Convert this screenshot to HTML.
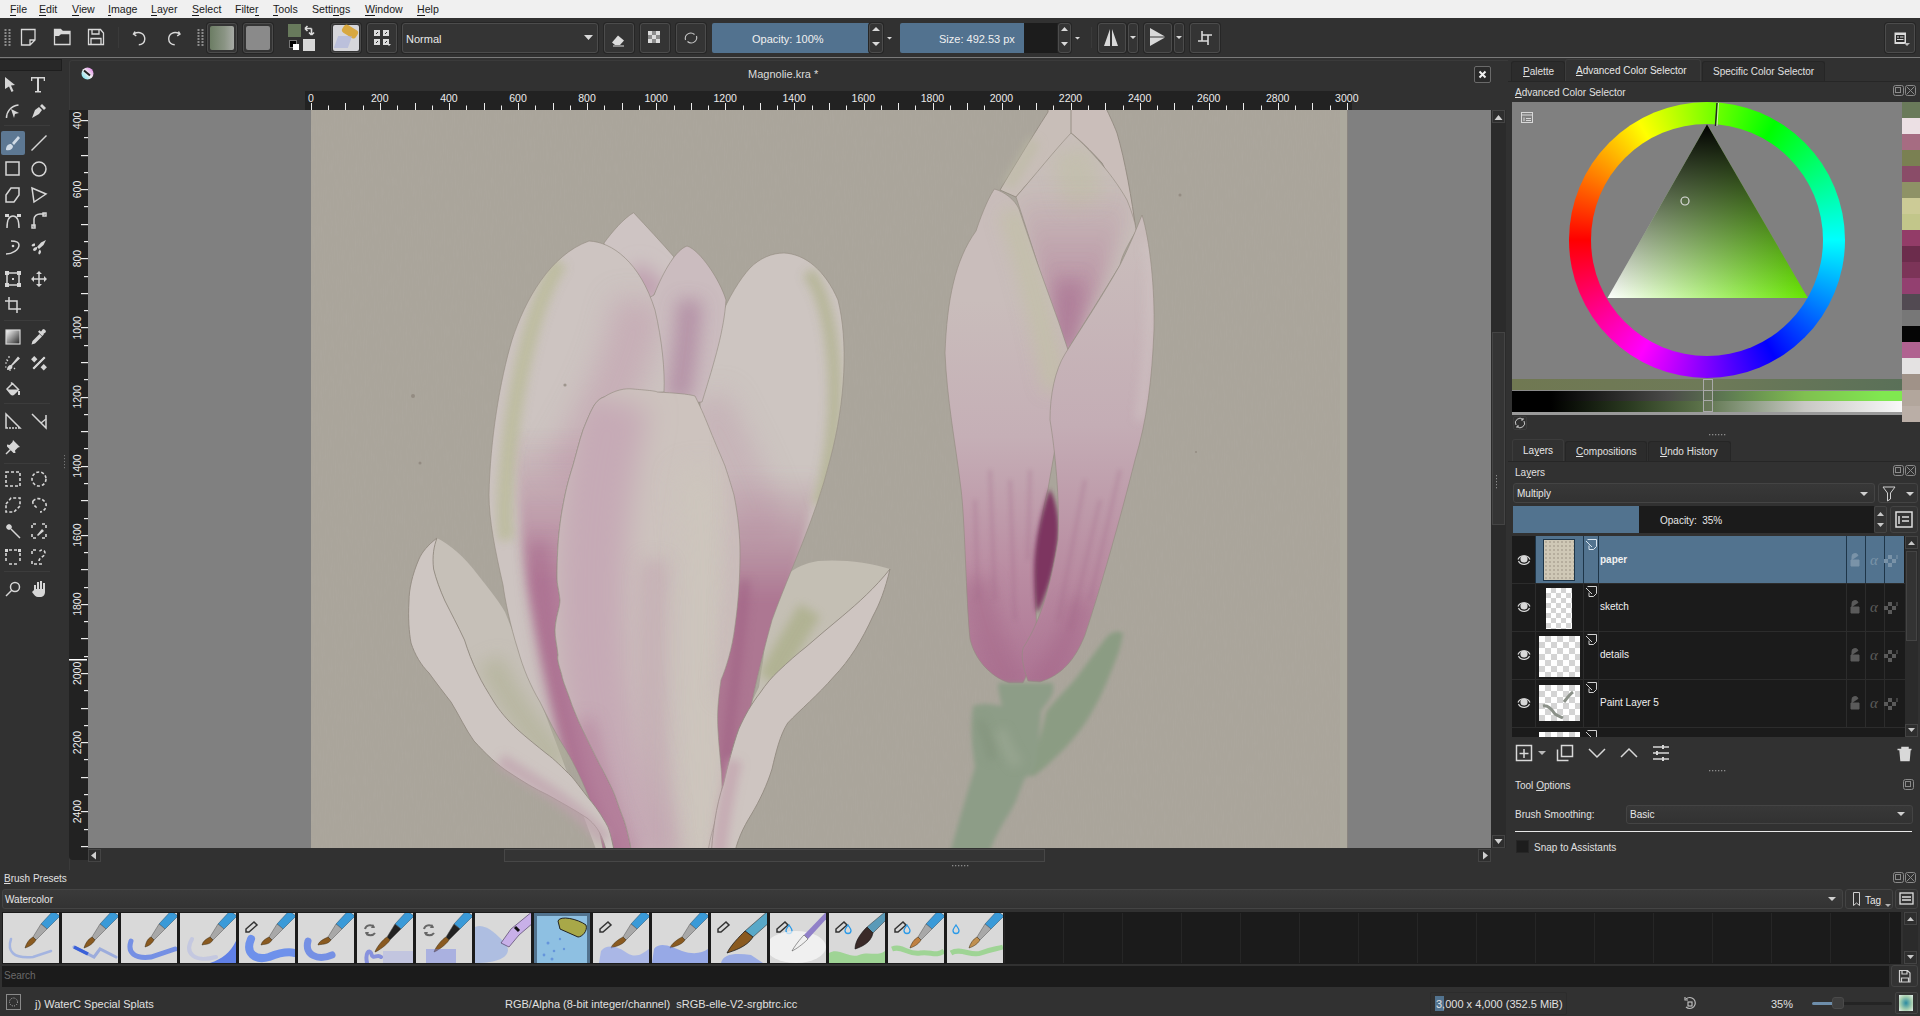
<!DOCTYPE html>
<html><head><meta charset="utf-8">
<style>
*{box-sizing:border-box;margin:0;padding:0}
html,body{width:1920px;height:1016px;overflow:hidden;background:#313131;font-family:"Liberation Sans",sans-serif;color:#e6e6e6}
.a{position:absolute}
#menu{left:0;top:0;width:1920px;height:18px;background:#f0f0f0;color:#1a1a1a;font-size:10.6px}
#menu span{position:absolute;top:3px}
#menu u{text-decoration:none;border-bottom:1px solid #1a1a1a}
#tb{left:0;top:18px;width:1920px;height:40px;background:#313131;border-bottom:1px solid #7a7a7a}
.btn{position:absolute;border:1px solid #4c4c4c;border-radius:3px;background:#343434;box-shadow:0 0 0 1px #262626}
.txt{position:absolute;white-space:nowrap}
.sm{font-size:10px}
</style></head><body>
<div id="menu" class="a">
<span style="left:10px"><u>F</u>ile</span>
<span style="left:39px"><u>E</u>dit</span>
<span style="left:72px"><u>V</u>iew</span>
<span style="left:108px"><u>I</u>mage</span>
<span style="left:151px"><u>L</u>ayer</span>
<span style="left:192px"><u>S</u>elect</span>
<span style="left:235px">Filte<u>r</u></span>
<span style="left:273px"><u>T</u>ools</span>
<span style="left:312px">Setti<u>n</u>gs</span>
<span style="left:365px"><u>W</u>indow</span>
<span style="left:417px"><u>H</u>elp</span>
</div>
<div id="tb" class="a">
<div class="btn" style="left:207px;top:5px;width:30px;height:30px;"></div>
<div class="a" style="left:210px;top:8px;width:24px;height:24px;border-radius:2px;background:linear-gradient(90deg,#6c7d64,#8a9484 60%,#a8aba6)"></div>
<div class="btn" style="left:243px;top:5px;width:30px;height:30px;"></div>
<div class="a" style="left:246px;top:8px;width:24px;height:24px;border-radius:2px;background:#8a8a8a"></div>
<div class="a" style="left:288px;top:6px;width:13px;height:13px;background:#687a5c"></div>
<div class="a" style="left:303px;top:21px;width:12px;height:12px;background:#d8d8d8"></div>
<div class="a" style="left:289px;top:22px;width:8px;height:8px;background:#000;border:1px solid #777"></div>
<div class="a" style="left:293px;top:26px;width:6px;height:6px;background:#fff"></div>
<div class="btn" style="left:331px;top:5px;width:30px;height:30px;"></div>
<div class="a" style="left:333px;top:7px;width:26px;height:26px;border-radius:2px;background:#d6d6da"></div>
<div class="a" style="left:342px;top:9px;width:16px;height:9px;border-radius:3px;background:#d8a840;transform:rotate(32deg)"></div>
<div class="a" style="left:336px;top:18px;width:14px;height:12px;background:#a8b0dc;opacity:.6;transform:skew(-20deg)"></div>
<div class="btn" style="left:367px;top:5px;width:30px;height:30px;"></div>
<div class="btn" style="left:402px;top:5px;width:196px;height:30px;"></div>
<div class="txt" style="left:406px;top:15px;font-size:11px;color:#e8e8e8">Normal</div>
<div class="btn" style="left:604px;top:5px;width:30px;height:30px;"></div>
<div class="btn" style="left:640px;top:5px;width:30px;height:30px;"></div>
<div class="btn" style="left:676px;top:5px;width:30px;height:30px;"></div>
<div class="a" style="left:712px;top:5px;width:157px;height:30px;background:#52728f;border-radius:2px 0 0 2px"></div>
<div class="txt" style="left:752px;top:15px;font-size:11px;color:#f0f0f0">Opacity: 100%</div>
<div class="btn" style="left:869px;top:5px;width:14px;height:30px;"></div>
<div class="a" style="left:900px;top:5px;width:124px;height:30px;background:#52728f;border-radius:2px 0 0 2px"></div>
<div class="a" style="left:1024px;top:5px;width:34px;height:30px;background:#1c1c1c"></div>
<div class="txt" style="left:939px;top:15px;font-size:11px;color:#f0f0f0">Size: 492.53 px</div>
<div class="btn" style="left:1058px;top:5px;width:13px;height:30px;"></div>
<div class="btn" style="left:1098px;top:5px;width:28px;height:30px;"></div>
<div class="btn" style="left:1128px;top:5px;width:10px;height:30px;"></div>
<div class="btn" style="left:1144px;top:5px;width:28px;height:30px;"></div>
<div class="btn" style="left:1174px;top:5px;width:10px;height:30px;"></div>
<div class="btn" style="left:1190px;top:5px;width:30px;height:30px;"></div>
<div class="btn" style="left:1885px;top:5px;width:30px;height:30px;"></div>
<svg class="a" style="left:0;top:0" width="1920" height="40" viewBox="0 18 1920 40" fill="none" stroke="#d9d9d9" stroke-width="1.3">
<g fill="#8c8c8c" stroke="none">
<rect x="4.5" y="29" width="2" height="2"/><rect x="8.5" y="29" width="2" height="2"/>
<rect x="4.5" y="32" width="2" height="2"/><rect x="8.5" y="32" width="2" height="2"/>
<rect x="4.5" y="35" width="2" height="2"/><rect x="8.5" y="35" width="2" height="2"/>
<rect x="4.5" y="38" width="2" height="2"/><rect x="8.5" y="38" width="2" height="2"/>
<rect x="4.5" y="41" width="2" height="2"/><rect x="8.5" y="41" width="2" height="2"/>
<rect x="4.5" y="44" width="2" height="2"/><rect x="8.5" y="44" width="2" height="2"/>
<rect x="197.5" y="29" width="2" height="2"/><rect x="201.5" y="29" width="2" height="2"/>
<rect x="197.5" y="32" width="2" height="2"/><rect x="201.5" y="32" width="2" height="2"/>
<rect x="197.5" y="35" width="2" height="2"/><rect x="201.5" y="35" width="2" height="2"/>
<rect x="197.5" y="38" width="2" height="2"/><rect x="201.5" y="38" width="2" height="2"/>
<rect x="197.5" y="41" width="2" height="2"/><rect x="201.5" y="41" width="2" height="2"/>
<rect x="197.5" y="44" width="2" height="2"/><rect x="201.5" y="44" width="2" height="2"/>
</g>
<path d="M21.5 29.5h13.5v10.5l-5 5h-8.5z M35 40h-5v5"/>
<path d="M54.5 33.5h15.5v11h-15.5z M54.5 33.5v-4h6l2 2h7.5v2.5"/>
<path fill="#d9d9d9" stroke="none" d="M54 29h6.5l2 2h7.5v3h-9l-2 2h-5z"/>
<path d="M88.5 29.5h12l3 3.5v11.5h-15z M92 29.5v4.5h7v-4.5 M91 44.5v-6h10v6"/>
<path stroke-width="1.4" d="M135 31.5l-1.5 2.5 2.8 1.8 M133.8 33.8c6-3 11 0 11 5.2c0 3.5-2.8 5.8-6 5.8"/>
<path stroke-width="1.4" d="M178.5 31.5l1.5 2.5-2.8 1.8 M179.7 33.8c-6-3-11 0-11 5.2c0 3.5 2.8 5.8 6 5.8"/>
<line x1="118.5" y1="27" x2="118.5" y2="48" stroke="#3a3a3a" stroke-width="1"/>
<line x1="1091.5" y1="27" x2="1091.5" y2="48" stroke="#3a3a3a" stroke-width="1"/>
<path fill="#d9d9d9" stroke="none" d="M584 35h9l-4.5 5z M887 37h5l-2.5 2.5z M1075 37h5l-2.5 2.5z M1130 36h6l-3 3z M1176 36h6l-3 3z M872 31h8l-4-4z M872 42h8l-4 4z M1061 31h7l-3.5-4z M1061 42h7l-3.5 4z"/>
<path fill="#d9d9d9" stroke="none" d="M1104 46l6-17v17z M1118 46l-6-17v17z M1150 28l15 8.5h-15z M1150 46l15-8.5h-15z"/>
<path stroke-width="1.6" d="M1202 31v10 M1198 41h10 M1202 35h10 M1208 35v10"/>
</svg>
<svg class="a" style="left:0;top:0" width="1920" height="40" viewBox="0 18 1920 40" fill="none" stroke="#dcdcdc" stroke-width="1.3">
<path d="M305 28.5h6.5M305 28.5l2.5-2.5M305 28.5l2.5 2.5M311.5 28.5v6.5M311.5 35l-2.5-2.5M311.5 35l2.5-2.5" stroke-width="1.6"/>
<g fill="#dcdcdc" stroke="none"><rect x="374" y="30" width="6" height="6"/><rect x="383" y="30" width="6" height="6"/><rect x="374" y="39" width="6" height="6"/><rect x="383" y="39" width="6" height="6"/></g>
<g stroke="#333" stroke-width="1"><path d="M376 34l2-2M385 34l2-2M376 43l2-2M385 43l2-2"/></g>
<path d="M387 44h4l-2 2z" fill="#dcdcdc" stroke="none"/>
<path d="M612 42.5l6-7 6 5-4 4.5h-5z" fill="#dcdcdc" stroke="none"/><path d="M613 46h11" stroke-width="1"/>
<g fill="#dcdcdc" stroke="none"><rect x="648" y="31" width="4" height="4"/><rect x="656" y="31" width="4" height="4"/><rect x="652" y="35" width="4" height="4"/><rect x="648" y="39" width="4" height="4"/><rect x="656" y="39" width="4" height="4"/></g>
<g fill="#8a8a8a" stroke="none"><rect x="652" y="31" width="4" height="4"/><rect x="648" y="35" width="4" height="4"/><rect x="656" y="35" width="4" height="4"/><rect x="652" y="39" width="4" height="4"/></g>
<path d="M685.5 40a5.5 5.5 0 0 1 9-5.5M696.5 36a5.5 5.5 0 0 1-9 5.5" stroke="#c8c8c8" stroke-width="1.1"/>
<rect x="1894.5" y="32.5" width="11.5" height="11.5" fill="#dcdcdc" stroke="none"/><rect x="1896" y="35" width="8.5" height="7" fill="#2a2a2a" stroke="none"/>
<path d="M1897 37h2M1900 37h3.5M1897 39.5h6.5" stroke="#dcdcdc" stroke-width="1"/>
<path d="M1904 43h6l-3 3z" fill="#bbb" stroke="none"/>
</svg>
</div>
<div class="a" style="left:0;top:58px;width:68px;height:812px;background:#313131"></div>
<div class="a" style="left:0;top:59px;width:62px;height:12px;background:#282828;border:1px solid #1e1e1e;border-left:none"></div>
<svg class="a" style="left:0;top:0" width="68" height="620"><line x1="4" y1="125.5" x2="50" y2="125.5" stroke="#3c3c3c"/><line x1="4" y1="320.5" x2="50" y2="320.5" stroke="#3c3c3c"/><line x1="4" y1="403.5" x2="50" y2="403.5" stroke="#3c3c3c"/><line x1="4" y1="463.5" x2="50" y2="463.5" stroke="#3c3c3c"/><line x1="4" y1="571.5" x2="50" y2="571.5" stroke="#3c3c3c"/><g transform="translate(5,77)"><path fill="#d6d6d6" d="M0 0 L10 8 L6 8.5 L8.5 14 L6.5 15 L4 9.5 L0 12z"/></g><g transform="translate(31,77)"><path fill="#d6d6d6" d="M0 0h14v4h-1.3v-2.5h-4.7v12.5h2v1.5h-6v-1.5h2v-12.5h-4.7v2.5h-1.3z"/></g><g transform="translate(5,103)"><path stroke="#d6d6d6" stroke-width="1.5" fill="none" stroke-width="2" d="M1.5 15c0-6 4-12 12-13"/><path fill="#d6d6d6" d="M6 6l8 4-4 1-1 4z"/></g><g transform="translate(31,103)"><path fill="#d6d6d6" d="M1 15l3-8 4-3 3 3-3 4-7 4zM9 3l2-2 4 4-2 2z"/></g><rect x="1" y="131" width="24" height="24" rx="2" fill="#5d7893"/><g transform="translate(5,135)"><path fill="#d0dbe6" d="M1 15c0-4 2-6 5-6l2 2c0 3-3 5-7 4zM7 8l6-7 2 2-6 7z"/></g><g transform="translate(31,135)"><path stroke="#d6d6d6" stroke-width="1.5" fill="none" stroke-width="1.6" d="M0.5 15.5L15.5 0.5"/></g><g transform="translate(5,161)"><rect stroke="#d6d6d6" stroke-width="1.5" fill="none" x="1" y="1" width="13" height="13"/></g><g transform="translate(31,161)"><circle stroke="#d6d6d6" stroke-width="1.5" fill="none" cx="8" cy="8" r="7"/></g><g transform="translate(5,187)"><path stroke="#d6d6d6" stroke-width="1.5" fill="none" d="M1 8l5-7h8v7l-5 7h-8z"/></g><g transform="translate(31,187)"><path stroke="#d6d6d6" stroke-width="1.5" fill="none" d="M1 1l14 6-12 8z"/></g><g transform="translate(5,213)"><path stroke="#d6d6d6" stroke-width="1.5" fill="none" d="M2 15c0-9 3-12 6-12s6 3 6 12"/><rect fill="#d6d6d6" x="0" y="1" width="4" height="3"/><rect fill="#d6d6d6" x="12" y="1" width="4" height="3"/></g><g transform="translate(31,213)"><path stroke="#d6d6d6" stroke-width="1.5" fill="none" d="M3 14v-8c0-3 3-5 6-5h5"/><rect stroke="#d6d6d6" stroke-width="1.5" fill="none" x="1" y="12" width="3" height="3"/><rect stroke="#d6d6d6" stroke-width="1.5" fill="none" x="12" y="0" width="3" height="3"/></g><g transform="translate(5,239)"><path stroke="#d6d6d6" stroke-width="1.5" fill="none" d="M1 15c6 0 13-4 13-9c0-3-4-4-8-4"/><circle fill="#d6d6d6" cx="8" cy="7" r="1.3"/></g><g transform="translate(31,239)"><path fill="#d6d6d6" d="M15 1l-5 2.5-4 4.5 2 2 4.5-4z"/><path fill="#d6d6d6" d="M6 8c-2 0-4 1-4 3l1 1c2 0 3-2 3-2zM9 10.5c-1 1-2 2.5-1.5 4.5l1 0.5c1.5-1 1.5-3 1.5-3zM4 4.5c-1.5 0-3 0.5-3.5 2l1 1c1.5 0 2.5-1 2.5-1z"/></g><g transform="translate(5,271)"><rect stroke="#d6d6d6" stroke-width="1.5" fill="none" x="2" y="2" width="12" height="12"/><rect fill="#d6d6d6" x="0" y="0" width="4" height="4"/><rect fill="#d6d6d6" x="12" y="0" width="4" height="4"/><rect fill="#d6d6d6" x="0" y="12" width="4" height="4"/><rect fill="#d6d6d6" x="12" y="12" width="4" height="4"/><rect fill="#d6d6d6" x="7" y="7" width="2" height="2"/></g><g transform="translate(31,271)"><path stroke="#d6d6d6" stroke-width="1.5" fill="none" d="M8 1v14M1 8h14"/><path fill="#d6d6d6" d="M8 0l3 3h-6zM8 16l3-3h-6zM0 8l3-3v6zM16 8l-3-3v6z"/></g><g transform="translate(5,297)"><path stroke="#d6d6d6" stroke-width="1.5" fill="none" stroke-width="1.8" d="M4 0v12h12M0 4h12v12"/></g><g transform="translate(5,329)"><defs><linearGradient id="gg" x1="0" y1="0" x2="1" y2="1"><stop offset="0" stop-color="#fff"/><stop offset="1" stop-color="#222"/></linearGradient></defs><rect x="1" y="1" width="14" height="14" fill="url(#gg)" stroke="#d6d6d6" stroke-width="1.2"/></g><g transform="translate(31,329)"><path fill="#d6d6d6" d="M0.5 15.5l1-3.5 7-7 2.5 2.5-7 7z"/><path fill="#d6d6d6" d="M8.5 4l2-2 1-1.5 1.5-0.5 2 2-0.5 1.5-1.5 1-2 2z"/><rect fill="#d6d6d6" x="7" y="3" width="6" height="2.2" transform="rotate(45 10 4)"/></g><g transform="translate(5,355)"><path fill="#d6d6d6" d="M6 10l7-8.5 2 2-8 7.5zM2 15c0-3 1.5-5 4-5l1.5 1.5c0 2.5-2 3.5-5.5 3.5z"/><g stroke="#d6d6d6" stroke-width="1.2"><path d="M0 8h2M1.5 4.5l1.5 1.5M4 1v2M0 12h1.5M5 14.5v1.5M9 13l1 1"/></g></g><g transform="translate(31,355)"><path fill="#d6d6d6" d="M3 14.5l-1.5-1.5 11.5-11.5 1.5 1.5z" transform="translate(0 0)"/><path stroke="#d6d6d6" stroke-width="1.5" fill="none" stroke-width="3" d="M2.5 13.5L13.5 2.5"/><rect fill="#d6d6d6" x="1" y="2" width="4.5" height="4.5" transform="rotate(45 3.25 4.25)"/><rect fill="#d6d6d6" x="10.5" y="10" width="4.5" height="4.5" transform="rotate(45 12.75 12.25)"/></g><g transform="translate(5,381)"><path stroke="#d6d6d6" stroke-width="1.5" fill="none" stroke-width="1.6" d="M2 8l5.5-5.5 6 6-4.5 4.5c-1 1-2 1-3 0z"/><path fill="#d6d6d6" d="M2.5 8.5h11l-4.5 4.5c-1 1-2 1-3 0z"/><rect fill="#d6d6d6" x="13" y="10" width="2" height="4"/><path stroke="#d6d6d6" stroke-width="1.5" fill="none" stroke-width="1.2" d="M6 1.5l2 2"/></g><g transform="translate(5,413)"><path stroke="#d6d6d6" stroke-width="1.5" fill="none" stroke-width="2" d="M1 1v14h14z"/><path fill="#313131" d="M4 7v6h6z"/><g fill="#313131"><rect x="3" y="14" width="1" height="2"/><rect x="6" y="14" width="1" height="2"/><rect x="9" y="14" width="1" height="2"/><rect x="12" y="14" width="1" height="2"/></g></g><g transform="translate(31,413)"><path stroke="#d6d6d6" stroke-width="1.5" fill="none" stroke-width="2" d="M1 1l14 14V2"/><path stroke="#d6d6d6" stroke-width="1.5" fill="none" stroke-width="1.4" d="M10 10l5-4"/></g><g transform="translate(5,439)"><path fill="#d6d6d6" d="M8 1l7 7-2 0.5-3 3 0.5 2.5-2 0-6.5-6.5 0-2 2.5 0.5 3-3z"/><path stroke="#d6d6d6" stroke-width="1.5" fill="none" stroke-width="1.6" d="M1 15l4.5-4.5"/></g><g transform="translate(5,471)"><rect stroke="#d6d6d6" stroke-width="1.6" fill="none" stroke-dasharray="3 2" x="1" y="1" width="14" height="14"/></g><g transform="translate(31,471)"><circle stroke="#d6d6d6" stroke-width="1.6" fill="none" stroke-dasharray="3 2" cx="8" cy="8" r="7"/></g><g transform="translate(5,497)"><path stroke="#d6d6d6" stroke-width="1.6" fill="none" stroke-dasharray="3 2" d="M1 7l5-6h9v8l-6 6h-8z"/></g><g transform="translate(31,497)"><path stroke="#d6d6d6" stroke-width="1.6" fill="none" stroke-dasharray="3 2" d="M2 4c3-4 11-3 13 3 1 4-3 8-6 8M2 4c-1 3 2 5 4 7"/></g><g transform="translate(5,523)"><path stroke="#d6d6d6" stroke-width="1.5" fill="none" stroke-width="2" d="M6 6l9 9"/><path stroke="#d6d6d6" stroke-width="1.5" fill="none" stroke-width="1.2" d="M1 4h6M4 1v6M2 2l4 4M6 2l-4 4"/></g><g transform="translate(31,523)"><path stroke="#d6d6d6" stroke-width="1.6" fill="none" stroke-dasharray="3 2" d="M1 5v-4h4M11 1h4v4M15 11v4h-4M5 15h-4v-4"/><path fill="#d6d6d6" d="M6 12l5-6 2 2-6 5z"/></g><g transform="translate(5,549)"><path stroke="#d6d6d6" stroke-width="1.6" fill="none" stroke-dasharray="3 2" d="M1 4v8M15 4v8M4 1h8M4 15h8"/><rect fill="#d6d6d6" x="0" y="0" width="3" height="3"/><rect fill="#d6d6d6" x="13" y="0" width="3" height="3"/></g><g transform="translate(31,549)"><path stroke="#d6d6d6" stroke-width="1.6" fill="none" stroke-dasharray="3 2" d="M1 5v-4h4M11 15h-10v-4M8 12c0-4 6-4 6-8s-6-4-6 0"/></g><g transform="translate(5,581)"><circle stroke="#d6d6d6" stroke-width="1.5" fill="none" stroke-width="1.8" cx="10" cy="6" r="4.5"/><path stroke="#d6d6d6" stroke-width="1.5" fill="none" stroke-width="2.2" d="M7 9L1 15"/></g><g transform="translate(31,581)"><path fill="#d6d6d6" d="M3 9V4h2v4h1V1h2v7h1V0h2v8h1V2h2v9c0 3-2 5-5 5H7c-2 0-4-2-6-5l1-1z"/></g>
<g fill="#777"><rect x="64" y="455" width="1" height="1.2"/><rect x="64" y="458" width="1" height="1.2"/><rect x="64" y="461" width="1" height="1.2"/><rect x="64" y="464" width="1" height="1.2"/><rect x="64" y="467" width="1" height="1.2"/></g>
</svg>
<div class="a" style="left:69px;top:60px;width:1439px;height:810px;background:#313131;border-left:1px solid #3a3a3a;border-top:1px solid #3a3a3a;border-radius:3px 0 0 0"></div>
<svg class="a" style="left:81px;top:67px" width="13" height="13" viewBox="0 0 13 13"><defs><linearGradient id="kl" x1="0" y1="1" x2="1" y2="0"><stop offset="0" stop-color="#5ee0f0"/><stop offset=".5" stop-color="#f0f0f0"/><stop offset="1" stop-color="#e070e8"/></linearGradient></defs><circle cx="6.5" cy="6.5" r="6" fill="url(#kl)"/><path d="M3 3.5l6 5" stroke="#222" stroke-width="2"/></svg>
<div class="txt" style="left:748px;top:68px;font-size:11px;color:#dcdcdc">Magnolie.kra *</div>
<div class="a" style="left:1474px;top:66px;width:17px;height:17px;border:1px solid #6a6a6a;border-radius:2px;background:#2a2a2a"></div>
<svg class="a" style="left:1474px;top:66px" width="17" height="17"><path d="M5.5 5.5l6 6M11.5 5.5l-6 6" stroke="#f0f0f0" stroke-width="2"/></svg>
<div class="a" style="left:305px;top:91px;width:1047px;height:19px;background:#222"></div>
<div class="a" style="left:69px;top:110px;width:19px;height:750px;background:#222;border-radius:0 0 0 4px"></div>
<div class="a" style="left:88px;top:110px;width:1403px;height:738px;background:#808080;overflow:hidden">
<!--PAINT_START--><svg class="a" style="left:0;top:0" width="1403" height="738" viewBox="88 110 1403 738">
<defs>
<filter id="b2" filterUnits="userSpaceOnUse" x="88" y="100" width="1420" height="780"><feGaussianBlur stdDeviation="2"/></filter>
<filter id="b5" filterUnits="userSpaceOnUse" x="88" y="100" width="1420" height="780"><feGaussianBlur stdDeviation="5"/></filter>
<filter id="b9" filterUnits="userSpaceOnUse" x="88" y="100" width="1420" height="780"><feGaussianBlur stdDeviation="9"/></filter>
<filter id="b14" filterUnits="userSpaceOnUse" x="88" y="100" width="1420" height="780"><feGaussianBlur stdDeviation="14"/></filter>
<filter id="paper" x="0" y="0" width="100%" height="100%"><feTurbulence type="fractalNoise" baseFrequency="0.9 0.08" numOctaves="2" seed="3"/><feColorMatrix values="0 0 0 0 0.45  0 0 0 0 0.42  0 0 0 0 0.38  0 0 0 -1.6 0.9"/><feComposite in2="SourceGraphic" operator="in"/></filter>
<clipPath id="cC"><path id="pC" d="M589,241 C612,242 640,262 655,310 C662,340 665,370 664,392 L604,397 C601,398 598,400 595,404 C591,410 587,420 583,430 C579,442 576,455 572.8,466 C570,475 567,485 565,495 C563,505 561,515 559.5,528.5 C558,540 557,560 557,577 C557,585 559,590 560,600 C560,608 556,615 555,630 C555,638 557,645 558,655 C557,660 559,665 561.7,674.6 C563,682 567,690 572,705 C576,715 580,725 586,736.7 C590,745 595,755 600,765 C604,772 608,780 612.6,789.8 C616,797 618,805 622,815 C625,822 627,830 630,843 L632,860 L605,860 C600,830 595,815 590,800 C582,780 575,765 566,750 C556,735 548,718 540,702 C530,685 523,668 518,650 C510,625 505,600 503,585 C495,550 489,520 489,495 C490,440 500,380 512,340 C525,300 550,255 589,241 Z"/></clipPath>
<clipPath id="cE"><path id="pE" d="M784,253 C805,254 825,270 838,300 C848,340 846,400 830,460 C815,520 790,570 772,620 C758,670 745,730 735,790 L725,860 L700,860 L700,400 C705,340 730,290 750,268 C760,258 772,253 784,253 Z"/></clipPath>
<clipPath id="cF"><path id="pF" d="M604,397 C615,390 625,388 633,389 C645,390 657,391 657,392 C675,393 688,394 695,396 C702,410 706,420 710,430 C716,445 721,456 725,466 C729,478 732,488 734,495 C738,515 740,535 740,553 C740,580 738,605 735,626 C732,650 726,668 721,680 C718,700 717,715 718,730 C719,750 722,770 722,787 C721,800 718,812 715,822 C712,832 709,842 707,860 L632,860 C631,852 631,848 630,843 C627,830 625,822 622,815 C618,805 616,797 612.6,789.8 C608,780 604,772 600,765 C595,755 590,745 586,736.7 C580,725 576,715 572,705 C567,690 563,682 561.7,674.6 C559,665 557,660 558,655 C557,645 555,638 555,630 C556,615 560,608 560,600 C559,590 557,585 557,577 C557,560 558,540 559.5,528.5 C561,515 563,505 565,495 C567,485 570,475 572.8,466 C576,455 579,442 583,430 C587,420 591,410 595,404 C598,400 601,398 604,397 Z"/></clipPath>
<clipPath id="cA"><path id="pA" d="M604,243 C612,232 624,218 633.6,212.7 C646,226 662,243 674,257 L653,297 L640,330 L615,320 Z"/></clipPath>
<clipPath id="cB"><path id="pB" d="M654,295 C664,270 676,250 687,246 C700,250 720,280 726,300 C724,330 715,360 702,402 L664,405 L640,400 L645,300 Z"/></clipPath>
<clipPath id="cJ"><path id="pJ" d="M994.5,189 C1005,192 1015,200 1019,209 L1037,262 L1059,323 L1070,356 L1060,420 L1048,489 C1040,520 1034,560 1036,613 C1038,640 1030,670 1023,683 L1009,683 C990,676 975,660 970,639 C966,600 965,520 961,489 C955,440 947,400 945,353 C947,300 955,260 976,231 C983,210 990,195 994.5,189 Z"/></clipPath>
<clipPath id="cK"><path id="pK" d="M1142,215 C1150,240 1155,290 1154,330 C1152,380 1147,420 1135,460 C1120,520 1100,590 1085,635 C1075,660 1062,675 1040,682 L1028,681 C1022,665 1020,650 1025,645 C1040,620 1050,590 1058,540 C1060,500 1055,450 1050,420 C1050,395 1055,370 1065,354 C1080,330 1100,300 1120,265 C1130,245 1138,225 1142,215 Z"/></clipPath>
<clipPath id="cI"><path id="pI" d="M1071,133 C1085,145 1110,170 1127,200 C1133,215 1136,225 1136,231 C1128,245 1122,255 1120,265 C1105,290 1080,330 1065,354 C1055,320 1045,290 1037,262 C1030,240 1022,215 1016,197 C1035,175 1055,150 1071,133 Z"/></clipPath>
<linearGradient id="gJ" gradientUnits="userSpaceOnUse" x1="0" y1="300" x2="0" y2="690"><stop offset="0" stop-color="#c9bdbb"/><stop offset=".35" stop-color="#c5afb6"/><stop offset=".7" stop-color="#ba8ca2"/><stop offset="1" stop-color="#ad7494"/></linearGradient>
<linearGradient id="gK" gradientUnits="userSpaceOnUse" x1="0" y1="250" x2="0" y2="690"><stop offset="0" stop-color="#c9bcbb"/><stop offset=".4" stop-color="#c4adb5"/><stop offset=".75" stop-color="#b88aa0"/><stop offset="1" stop-color="#ad7494"/></linearGradient>
<linearGradient id="gE" gradientUnits="userSpaceOnUse" x1="0" y1="470" x2="0" y2="600"><stop offset="0" stop-color="#ad7792" stop-opacity="0"/><stop offset="1" stop-color="#ad7792" stop-opacity="1"/></linearGradient>
<linearGradient id="gC" gradientUnits="userSpaceOnUse" x1="0" y1="430" x2="0" y2="580"><stop offset="0" stop-color="#b47e9a" stop-opacity="0"/><stop offset="1" stop-color="#b47e9a" stop-opacity="1"/></linearGradient>
<linearGradient id="gI" gradientUnits="userSpaceOnUse" x1="0" y1="185" x2="0" y2="300"><stop offset="0" stop-color="#b88ca2" stop-opacity="0"/><stop offset="1" stop-color="#b88ca2" stop-opacity="1"/></linearGradient>
</defs>
<rect x="311" y="110" width="1037" height="738" fill="#aaa59b"/>
<rect x="311" y="110" width="1037" height="738" fill="#aaa59b" filter="url(#paper)" opacity=".35"/>
<g id="leftflower">
<!-- left sepal inner lobe -->
<path d="M437,538 C450,545 464,556 478,575 C490,590 498,600 505,612 L540,700 L600,860 L616,860 C612,845 610,835 608,827 C600,812 595,805 590,800 C580,788 575,782 572,777 C560,765 552,758 547,754 C535,745 525,737 518,730 C505,718 498,710 494,702 C488,692 482,683 477.5,673 C472,660 468,650 464.5,640 C458,625 450,612 445,601 C440,588 436,578 433.6,569 C432,555 434,545 437,538 Z" fill="#c6c0b8"/>
<path d="M490,660 C505,695 530,730 560,765" stroke="#b2b398" stroke-width="26" fill="none" filter="url(#b9)" opacity=".7"/>
<!-- right sepal inner lobe -->
<path d="M890,569 C870,562 840,559 818,561 C805,563 795,568 788,574 C780,585 775,595 772,601 C768,620 765,640 763,662 C761,672 760,680 759,687 L738.8,729 C745,715 752,703 760,693 C766,684 772,677 778.5,671 C788,662 797,654 806,647 C818,637 830,626 842.6,616 C858,603 875,588 890,569 Z" fill="#c4bfb4"/>
<path d="M810,610 C795,635 782,655 770,680" stroke="#aeb18e" stroke-width="24" fill="none" filter="url(#b5)" opacity=".85"/>
<!-- right big petal E -->
<use href="#pE" fill="#cdc5c1"/>
<g clip-path="url(#cE)">
<path d="M705,400 C730,450 750,490 765,540" stroke="#c2a8b2" stroke-width="45" fill="none" filter="url(#b14)" opacity=".6"/>
<path d="M700,460 L820,460 C800,580 770,680 735,790 L700,800 Z" fill="url(#gE)" filter="url(#b5)"/>
<path d="M745,580 C738,660 728,730 724,790" stroke="#9c5a80" stroke-width="10" fill="none" filter="url(#b5)" opacity=".5"/>
<path d="M808,272 C830,300 840,370 832,440 C828,470 824,490 818,505" stroke="#b6b698" stroke-width="13" fill="none" filter="url(#b5)" opacity=".95"/>
</g>
<use href="#pE" fill="none" stroke="#928a80" stroke-width=".9" opacity=".7"/>
<!-- top petal A -->
<use href="#pA" fill="#cec4c3"/>
<g clip-path="url(#cA)"><path d="M630,275 C645,285 652,292 655,300" stroke="#c0a0b0" stroke-width="30" fill="none" filter="url(#b9)"/></g>
<use href="#pA" fill="none" stroke="#928a80" stroke-width=".9" opacity=".7"/>
<!-- petal B -->
<use href="#pB" fill="#cbbcbf"/>
<g clip-path="url(#cB)"><path d="M690,300 C688,335 684,365 678,400" stroke="#b08aa2" stroke-width="24" fill="none" filter="url(#b9)" opacity=".85"/></g>
<use href="#pB" fill="none" stroke="#928a80" stroke-width=".9" opacity=".7"/>
<!-- left big petal C -->
<use href="#pC" fill="#cdc4c1"/>
<g clip-path="url(#cC)">
<path d="M560,262 C535,300 515,380 507,470 C504,500 504,520 506,540" stroke="#bcbc9e" stroke-width="16" fill="none" filter="url(#b5)" opacity=".9"/>
<path d="M640,300 C630,365 600,420 565,480" stroke="#c4a6b2" stroke-width="50" fill="none" filter="url(#b14)" opacity=".7"/>
<path d="M520,380 C515,450 518,520 528,590 C540,660 560,740 590,860 L640,860 L640,380 Z" fill="url(#gC)" filter="url(#b5)" opacity=".95"/>
<path d="M538,540 C542,610 552,680 568,740 C578,790 595,830 612,860" stroke="#a05c84" stroke-width="16" fill="none" filter="url(#b9)" opacity=".5"/>
</g>
<use href="#pC" fill="none" stroke="#928a80" stroke-width=".9" opacity=".7"/>
<!-- front petal F -->
<use href="#pF" fill="#cdc3be"/>
<g clip-path="url(#cF)">
<path d="M615,400 C595,480 585,560 595,680 C605,760 625,820 645,860" stroke="#c6aab6" stroke-width="70" fill="none" filter="url(#b14)"/>
<path d="M695,470 C708,560 705,660 700,860" stroke="#cdc8bc" stroke-width="34" fill="none" filter="url(#b14)" opacity=".6"/>
<path d="M585,720 C598,780 615,830 632,860" stroke="#b27a98" stroke-width="14" fill="none" filter="url(#b9)" opacity=".7"/>
<path d="M655,560 C648,680 655,780 668,860" stroke="#c0a0ae" stroke-width="26" fill="none" filter="url(#b9)" opacity=".5"/>
<path d="M735,430 C740,520 735,600 722,700" stroke="#c6b0b6" stroke-width="14" fill="none" filter="url(#b9)" opacity=".6"/>
</g>
<use href="#pF" fill="none" stroke="#928a80" stroke-width=".9" opacity=".7"/>
<!-- left sepal light outer -->
<path id="pLS" d="M437,538 C428,545 422,552 419,559 C412,575 409,590 409,601 C408,618 409,632 411,643 C415,655 421,665 429,673 C437,684 444,693 451,702 C459,715 466,730 474,741 C485,753 497,765 510,773 C522,781 535,789 548,795 C562,803 575,810 587,818 C597,826 604,836 608,860 L616,860 C613,845 611,835 608,827 C601,814 595,806 590,800 C582,790 577,783 572,777 C562,767 554,759 547,754 C537,746 527,738 518,730 C507,720 499,710 494,702 C488,692 482,683 477.5,673 C472,662 468,651 464.5,640 C458,626 451,613 445,601 C440,590 436,579 433.6,569 C432,556 434,546 437,538 Z" fill="#cec6c2" stroke="#928a80" stroke-width=".9"/>
<path d="M500,760 C540,785 575,805 605,840" stroke="#c0a2ae" stroke-width="14" fill="none" filter="url(#b5)" opacity=".7"/>
<!-- right sepal light outer -->
<path id="pRS" d="M890,569 C885,590 880,603 873,616 C862,640 850,660 833.5,677 C818,695 800,710 787.7,723 C780,735 776,752 772,769 C767,785 760,800 751,815 C743,828 737,840 733,860 L711,860 C712,835 716,805 723.6,784 C728,765 733,745 738.8,729 C745,715 752,703 760,693 C766,684 772,677 778.5,671 C788,662 797,654 806,647 C818,637 830,626 842.6,616 C858,603 875,588 890,569 Z" fill="#cec5c1" stroke="#928a80" stroke-width=".9"/>
<path d="M735,760 C728,790 722,820 718,860" stroke="#c2a2ae" stroke-width="14" fill="none" filter="url(#b5)" opacity=".75"/>
</g>
<g id="bud">
<!-- back-left narrow petal G -->
<path d="M1048,100 L1073,100 L1071.6,133 C1050,160 1030,180 1016,197 L1000,190 C1012,170 1030,140 1048,112 Z" fill="#c8beb8" stroke="#928a80" stroke-width=".9"/>
<path d="M1035,140 C1025,160 1015,175 1008,186" stroke="#bebca6" stroke-width="12" fill="none" filter="url(#b5)" opacity=".7"/>

<!-- back top petal H -->
<path d="M1071,100 L1102,100 C1108,112 1114,125 1117,133 C1125,160 1132,200 1136,231 L1102,163 C1090,150 1080,140 1071,133 Z" fill="#cabeba" stroke="#928a80" stroke-width=".9"/>
<!-- middle petal I -->
<use href="#pI" fill="#c8beba"/>
<g clip-path="url(#cI)">
<path d="M1072,150 C1075,170 1080,190 1085,205" stroke="#c2bfac" stroke-width="40" fill="none" filter="url(#b9)" opacity=".8"/>
<path d="M1010,180 L1140,180 L1100,290 L1065,360 Z" fill="url(#gI)" filter="url(#b9)" opacity=".9"/>
<path d="M1070,280 C1068,310 1066,330 1065,354" stroke="#aa7694" stroke-width="24" fill="none" filter="url(#b9)" opacity=".7"/>
</g>
<use href="#pI" fill="none" stroke="#928a80" stroke-width=".9" opacity=".7"/>
<!-- left front petal J -->
<use href="#pJ" fill="url(#gJ)"/>
<g clip-path="url(#cJ)">
<path d="M1010,210 C1030,270 1045,330 1055,390" stroke="#c2c0a8" stroke-width="22" fill="none" filter="url(#b9)" opacity=".9"/>
<path d="M975,580 C985,630 995,660 1015,690" stroke="#a66a8a" stroke-width="30" fill="none" filter="url(#b9)" opacity=".55"/>
<path d="M990,470 L995,600 M1010,480 L1015,620 M975,500 L978,600 M1030,470 L1028,560" stroke="#a06888" stroke-width="2" fill="none" filter="url(#b2)" opacity=".5"/>
</g>
<use href="#pJ" fill="none" stroke="#928a80" stroke-width=".9" opacity=".7"/>
<!-- dark opening -->
<path d="M1049.7,489 C1042,510 1034,540 1034,570 C1034,590 1035,605 1037,613 C1045,600 1055,570 1058,540 C1060,520 1056,500 1049.7,489 Z" fill="#7d3461" filter="url(#b2)"/>
<!-- right front petal K -->
<use href="#pK" fill="url(#gK)"/>
<g clip-path="url(#cK)">
<path d="M1080,600 C1070,640 1055,665 1035,690" stroke="#a46688" stroke-width="22" fill="none" filter="url(#b9)" opacity=".55"/>
<path d="M1100,500 L1070,630 M1085,480 L1058,620 M1120,470 L1090,600" stroke="#a06888" stroke-width="2" fill="none" filter="url(#b2)" opacity=".5"/>
<path d="M1148,240 C1152,300 1150,360 1140,420" stroke="#d0c4c4" stroke-width="10" fill="none" filter="url(#b5)" opacity=".6"/>
</g>
<use href="#pK" fill="none" stroke="#928a80" stroke-width=".9" opacity=".7"/>
<!-- stem -->
<g filter="url(#b2)">
<path d="M1029,776 C1036,750 1043,730 1046,712 C1055,700 1068,688 1077,677 C1088,662 1098,648 1106,638 C1110,633 1116,630 1123,633 C1122,640 1120,648 1118,654 C1110,675 1102,695 1093,710 C1085,725 1075,737 1066,747 C1055,758 1045,768 1034,776 Z" fill="#8b9c83"/>
<path d="M998,683 L1053,683 C1054,690 1053,693 1052,695 C1048,702 1044,707 1041,711 C1040,730 1038,750 1036,765 C1033,772 1030,776 1025,778 C1020,790 1018,796 1016,801 C1008,818 995,832 987,860 L948,860 C955,835 965,800 975,767 C972,750 970,730 973,706 C985,702 995,705 1002,706 C1000,698 998,690 998,683 Z" fill="#8d9d87"/>
</g>
<path d="M1000,730 C1005,745 1010,755 1018,765" stroke="#a0ac98" stroke-width="12" fill="none" filter="url(#b5)" opacity=".5"/>
<path d="M980,720 C985,735 990,745 992,760" stroke="#7c8c74" stroke-width="8" fill="none" filter="url(#b5)" opacity=".5"/>
</g>
<g fill="#8a8178" opacity=".7"><circle cx="413" cy="396" r="2"/><circle cx="565" cy="385" r="1.6"/><circle cx="420" cy="463" r="1.5"/><circle cx="1180" cy="195" r="1.5"/><circle cx="1196" cy="452" r="1"/></g>

<rect x="1340" y="110" width="7" height="738" fill="#acaa9e" opacity=".8"/><rect x="1347" y="110" width="1" height="738" fill="#8a8580"/>
</svg>
<!--PAINT_END-->

</div>
<svg class="a" style="left:0;top:0" width="1500" height="870" font-family="Liberation Sans" font-size="10.5" fill="#ececec" text-anchor="middle">
<rect x="311" y="103" width="1" height="7"/><rect x="328" y="105.5" width="1" height="4.5"/><rect x="345" y="103" width="1" height="7"/><rect x="363" y="105.5" width="1" height="4.5"/><rect x="380" y="103" width="1" height="7"/><rect x="397" y="105.5" width="1" height="4.5"/><rect x="415" y="103" width="1" height="7"/><rect x="432" y="105.5" width="1" height="4.5"/><rect x="449" y="103" width="1" height="7"/><rect x="466" y="105.5" width="1" height="4.5"/><rect x="484" y="103" width="1" height="7"/><rect x="501" y="105.5" width="1" height="4.5"/><rect x="518" y="103" width="1" height="7"/><rect x="535" y="105.5" width="1" height="4.5"/><rect x="553" y="103" width="1" height="7"/><rect x="570" y="105.5" width="1" height="4.5"/><rect x="587" y="103" width="1" height="7"/><rect x="604" y="105.5" width="1" height="4.5"/><rect x="622" y="103" width="1" height="7"/><rect x="639" y="105.5" width="1" height="4.5"/><rect x="656" y="103" width="1" height="7"/><rect x="674" y="105.5" width="1" height="4.5"/><rect x="691" y="103" width="1" height="7"/><rect x="708" y="105.5" width="1" height="4.5"/><rect x="725" y="103" width="1" height="7"/><rect x="743" y="105.5" width="1" height="4.5"/><rect x="760" y="103" width="1" height="7"/><rect x="777" y="105.5" width="1" height="4.5"/><rect x="794" y="103" width="1" height="7"/><rect x="812" y="105.5" width="1" height="4.5"/><rect x="829" y="103" width="1" height="7"/><rect x="846" y="105.5" width="1" height="4.5"/><rect x="864" y="103" width="1" height="7"/><rect x="881" y="105.5" width="1" height="4.5"/><rect x="898" y="103" width="1" height="7"/><rect x="915" y="105.5" width="1" height="4.5"/><rect x="933" y="103" width="1" height="7"/><rect x="950" y="105.5" width="1" height="4.5"/><rect x="967" y="103" width="1" height="7"/><rect x="984" y="105.5" width="1" height="4.5"/><rect x="1002" y="103" width="1" height="7"/><rect x="1019" y="105.5" width="1" height="4.5"/><rect x="1036" y="103" width="1" height="7"/><rect x="1053" y="105.5" width="1" height="4.5"/><rect x="1071" y="103" width="1" height="7"/><rect x="1088" y="105.5" width="1" height="4.5"/><rect x="1105" y="103" width="1" height="7"/><rect x="1123" y="105.5" width="1" height="4.5"/><rect x="1140" y="103" width="1" height="7"/><rect x="1157" y="105.5" width="1" height="4.5"/><rect x="1174" y="103" width="1" height="7"/><rect x="1192" y="105.5" width="1" height="4.5"/><rect x="1209" y="103" width="1" height="7"/><rect x="1226" y="105.5" width="1" height="4.5"/><rect x="1243" y="103" width="1" height="7"/><rect x="1261" y="105.5" width="1" height="4.5"/><rect x="1278" y="103" width="1" height="7"/><rect x="1295" y="105.5" width="1" height="4.5"/><rect x="1312" y="103" width="1" height="7"/><rect x="1330" y="105.5" width="1" height="4.5"/><rect x="1347" y="103" width="1" height="7"/><text x="310.8" y="101.5">0</text><text x="379.8" y="101.5">200</text><text x="448.9" y="101.5">400</text><text x="518.0" y="101.5">600</text><text x="587.0" y="101.5">800</text><text x="656.1" y="101.5">1000</text><text x="725.2" y="101.5">1200</text><text x="794.2" y="101.5">1400</text><text x="863.3" y="101.5">1600</text><text x="932.4" y="101.5">1800</text><text x="1001.4" y="101.5">2000</text><text x="1070.5" y="101.5">2200</text><text x="1139.6" y="101.5">2400</text><text x="1208.7" y="101.5">2600</text><text x="1277.7" y="101.5">2800</text><text x="1346.8" y="101.5">3000</text>
<rect x="69" y="659" width="18" height="1.5" fill="#ffffff"/><g><rect x="81" y="120" width="7" height="1.2"/><rect x="84" y="137" width="4" height="1.2"/><rect x="81" y="155" width="7" height="1.2"/><rect x="84" y="172" width="4" height="1.2"/><rect x="81" y="189" width="7" height="1.2"/><rect x="84" y="206" width="4" height="1.2"/><rect x="81" y="224" width="7" height="1.2"/><rect x="84" y="241" width="4" height="1.2"/><rect x="81" y="258" width="7" height="1.2"/><rect x="84" y="276" width="4" height="1.2"/><rect x="81" y="293" width="7" height="1.2"/><rect x="84" y="310" width="4" height="1.2"/><rect x="81" y="327" width="7" height="1.2"/><rect x="84" y="345" width="4" height="1.2"/><rect x="81" y="362" width="7" height="1.2"/><rect x="84" y="379" width="4" height="1.2"/><rect x="81" y="397" width="7" height="1.2"/><rect x="84" y="414" width="4" height="1.2"/><rect x="81" y="431" width="7" height="1.2"/><rect x="84" y="448" width="4" height="1.2"/><rect x="81" y="466" width="7" height="1.2"/><rect x="84" y="483" width="4" height="1.2"/><rect x="81" y="500" width="7" height="1.2"/><rect x="84" y="518" width="4" height="1.2"/><rect x="81" y="535" width="7" height="1.2"/><rect x="84" y="552" width="4" height="1.2"/><rect x="81" y="569" width="7" height="1.2"/><rect x="84" y="587" width="4" height="1.2"/><rect x="81" y="604" width="7" height="1.2"/><rect x="84" y="621" width="4" height="1.2"/><rect x="81" y="638" width="7" height="1.2"/><rect x="84" y="656" width="4" height="1.2"/><rect x="81" y="673" width="7" height="1.2"/><rect x="84" y="690" width="4" height="1.2"/><rect x="81" y="708" width="7" height="1.2"/><rect x="84" y="725" width="4" height="1.2"/><rect x="81" y="742" width="7" height="1.2"/><rect x="84" y="759" width="4" height="1.2"/><rect x="81" y="777" width="7" height="1.2"/><rect x="84" y="794" width="4" height="1.2"/><rect x="81" y="811" width="7" height="1.2"/><rect x="84" y="829" width="4" height="1.2"/><rect x="81" y="846" width="7" height="1.2"/><text transform="translate(80.5,120.4) rotate(-90)" x="0" y="0">400</text><text transform="translate(80.5,189.5) rotate(-90)" x="0" y="0">600</text><text transform="translate(80.5,258.6) rotate(-90)" x="0" y="0">800</text><text transform="translate(80.5,327.8) rotate(-90)" x="0" y="0">1000</text><text transform="translate(80.5,396.9) rotate(-90)" x="0" y="0">1200</text><text transform="translate(80.5,466.0) rotate(-90)" x="0" y="0">1400</text><text transform="translate(80.5,535.1) rotate(-90)" x="0" y="0">1600</text><text transform="translate(80.5,604.2) rotate(-90)" x="0" y="0">1800</text><text transform="translate(80.5,673.4) rotate(-90)" x="0" y="0">2000</text><text transform="translate(80.5,742.5) rotate(-90)" x="0" y="0">2200</text><text transform="translate(80.5,811.6) rotate(-90)" x="0" y="0">2400</text></g>
</svg>
<div class="a" style="left:1491px;top:110px;width:15px;height:738px;background:#2b2b2b"></div>
<div class="a" style="left:1492px;top:110px;width:13px;height:13px;border:1px solid #444;background:#2e2e2e"></div>
<div class="a" style="left:1492px;top:835px;width:13px;height:13px;border:1px solid #444;background:#2e2e2e"></div>
<div class="a" style="left:1492px;top:332px;width:13px;height:193px;border:1px solid #444;background:#343434"></div>
<div class="a" style="left:88px;top:849px;width:13px;height:13px;border:1px solid #444;background:#2e2e2e"></div>
<div class="a" style="left:1478px;top:849px;width:13px;height:13px;border:1px solid #444;background:#2e2e2e"></div>
<div class="a" style="left:504px;top:849px;width:541px;height:13px;border:1px solid #474747;background:#343434"></div>
<svg class="a" style="left:0;top:0" width="1510" height="870" fill="#d0d0d0">
<path d="M1494.5 120h8l-4-5z M1494.5 839h8l-4 5z M96 851.5v8l-5-4z M1483 851.5v8l5-4z"/>
<g fill="#8a8a8a"><rect x="952" y="865" width="1.3" height="1.3"/><rect x="955" y="865" width="1.3" height="1.3"/><rect x="958" y="865" width="1.3" height="1.3"/><rect x="961" y="865" width="1.3" height="1.3"/><rect x="964" y="865" width="1.3" height="1.3"/><rect x="967" y="865" width="1.3" height="1.3"/>
<rect x="1496" y="475" width="1" height="1.3"/><rect x="1496" y="478" width="1" height="1.3"/><rect x="1496" y="481" width="1" height="1.3"/><rect x="1496" y="484" width="1" height="1.3"/><rect x="1496" y="487" width="1" height="1.3"/></g>
</svg>

<div class="a" style="left:1508px;top:58px;width:412px;height:812px;background:#313131"></div>
<div class="a" style="left:1511px;top:61px;width:54px;height:21px;border:1px solid #262626;border-bottom:none;border-radius:3px 3px 0 0;background:#2c2c2c"></div>
<div class="a" style="left:1565px;top:59px;width:136px;height:23px;border:1px solid #3c3c3c;border-bottom:none;border-radius:3px 3px 0 0;background:#313131"></div>
<div class="a" style="left:1702px;top:61px;width:123px;height:21px;border:1px solid #262626;border-bottom:none;border-radius:3px 3px 0 0;background:#2c2c2c"></div>
<div class="a" style="left:1508px;top:81px;width:412px;height:1px;background:#262626"></div>
<div class="txt sm" style="left:1523px;top:66px;color:#e0e0e0"><u>P</u>alette</div>
<div class="txt sm" style="left:1576px;top:65px;color:#e8e8e8"><u>A</u>dvanced Color Selector</div>
<div class="txt sm" style="left:1713px;top:66px;color:#e0e0e0">Specific Color Selector</div>
<div class="txt sm" style="left:1515px;top:87px;color:#e0e0e0"><u>A</u>dvanced Color Selector</div>
<svg class="a" style="left:1890px;top:83px" width="30" height="16" fill="none" stroke="#8a8a8a" stroke-width="1"><rect x="3.5" y="2.5" width="10" height="10" rx="2"/><rect x="5.5" y="4.5" width="5" height="5"/><rect x="15.5" y="2.5" width="10" height="10" rx="2"/><path d="M17 4l7 7M24 4l-7 7"/></svg>
<div class="a" style="left:1512px;top:102px;width:390px;height:311px;background:#808080"></div>
<svg class="a" style="left:1519px;top:110px" width="16" height="16" fill="none" stroke="#d8d8d8" stroke-width="1"><rect x="2.5" y="2.5" width="11" height="10"/><path d="M2.5 5h11M5 7.5v3.5M7 8.5h5M7 10.5h5"/></svg>
<div class="a" style="left:1569px;top:102px;width:276px;height:276px;border-radius:50%;background:conic-gradient(from -90deg,#f00,#ff0,#0f0,#0ff,#00f,#f0f,#f00)"></div>
<div class="a" style="left:1591px;top:124px;width:232px;height:232px;border-radius:50%;background:#808080"></div>
<svg class="a" style="left:1512px;top:102px" width="390" height="311">
<defs>
<linearGradient id="tg1" x1="95" y1="0" x2="296" y2="0" gradientUnits="userSpaceOnUse"><stop offset="0" stop-color="#fff"/><stop offset="1" stop-color="#66e600"/></linearGradient>
<linearGradient id="tg2" x1="0" y1="22" x2="0" y2="196" gradientUnits="userSpaceOnUse"><stop offset="0" stop-color="#000" stop-opacity="1"/><stop offset="1" stop-color="#000" stop-opacity="0"/></linearGradient>
</defs>
<path d="M195 22.3L95.5 196L295.8 196z" fill="url(#tg1)"/>
<path d="M195 22.3L95.5 196L295.8 196z" fill="url(#tg2)"/>
<path d="M205 1L203.5 24" stroke="#222" stroke-width="1.5"/>
<path d="M206.5 1L205 24" stroke="#eee" stroke-width="0.8"/>
<circle cx="173" cy="99" r="4" fill="none" stroke="#ddd" stroke-width="1.2"/>
</svg>
<div class="a" style="left:1512px;top:379px;width:390px;height:11px;background:linear-gradient(90deg,#707852,#6e7a58 50%,#5a7058)"></div>
<div class="a" style="left:1512px;top:390px;width:390px;height:11px;background:linear-gradient(90deg,#000 10%,#4a4a48 40%,#5e7a52 55%,#80c050 75%,#80e850 95%)"></div><div class="a" style="left:1512px;top:390px;width:390px;height:1px;background:#8a8a8a"></div><div class="a" style="left:1512px;top:401px;width:390px;height:1px;background:#8a8a8a"></div>
<div class="a" style="left:1512px;top:401px;width:390px;height:11px;background:linear-gradient(90deg,#000 10%,#2a3a20 30%,#5a7048 48%,#8a9a80 60%,#c8c8c4 75%,#f8f8f8)"></div>
<div class="a" style="left:1512px;top:412px;width:390px;height:3px;background:#9a9a9a"></div>
<div class="a" style="left:1703px;top:379px;width:10px;height:33px;border:1px solid #aaa;background:rgba(110,120,95,.5)"></div>
<div class="a" style="left:1703px;top:390px;width:10px;height:11px;border:1px solid #aaa"></div>
<div class="a" style="left:1902px;top:102px;width:18px;height:16px;background:#6a7a5a"></div><div class="a" style="left:1902px;top:118px;width:18px;height:16px;background:#ece0e4"></div><div class="a" style="left:1902px;top:134px;width:18px;height:16px;background:#a66c82"></div><div class="a" style="left:1902px;top:150px;width:18px;height:16px;background:#7a8052"></div><div class="a" style="left:1902px;top:166px;width:18px;height:16px;background:#8a4c68"></div><div class="a" style="left:1902px;top:182px;width:18px;height:16px;background:#8e9266"></div><div class="a" style="left:1902px;top:198px;width:18px;height:16px;background:#cccb96"></div><div class="a" style="left:1902px;top:214px;width:18px;height:16px;background:#c2c68a"></div><div class="a" style="left:1902px;top:230px;width:18px;height:16px;background:#933c68"></div><div class="a" style="left:1902px;top:246px;width:18px;height:16px;background:#6c2c4c"></div><div class="a" style="left:1902px;top:262px;width:18px;height:16px;background:#7c3458"></div><div class="a" style="left:1902px;top:278px;width:18px;height:16px;background:#934070"></div><div class="a" style="left:1902px;top:294px;width:18px;height:16px;background:#524a52"></div><div class="a" style="left:1902px;top:310px;width:18px;height:16px;background:#777777"></div><div class="a" style="left:1902px;top:326px;width:18px;height:16px;background:#050505"></div><div class="a" style="left:1902px;top:342px;width:18px;height:16px;background:#b06290"></div><div class="a" style="left:1902px;top:358px;width:18px;height:16px;background:#e4e2e2"></div><div class="a" style="left:1902px;top:374px;width:18px;height:16px;background:#a09288"></div><div class="a" style="left:1902px;top:390px;width:18px;height:16px;background:#b2a69c"></div><div class="a" style="left:1902px;top:406px;width:18px;height:16px;background:#baaea6"></div>
<div class="a" style="left:1513px;top:416px;width:14px;height:14px;border:1px solid #3c3c3c;border-radius:2px"></div>
<svg class="a" style="left:1513px;top:416px" width="14" height="14" fill="none" stroke="#c8c8c8" stroke-width="1"><path d="M3 9a4.5 4.5 0 0 1 7-5.5M11 5a4.5 4.5 0 0 1-7 5.5"/><path d="M10 2v2h-2M4 12v-2h2"/></svg>
<svg class="a" style="left:1700px;top:430px" width="30" height="8" fill="#8a8a8a"><rect x="9" y="4" width="1.3" height="1.3"/><rect x="12" y="4" width="1.3" height="1.3"/><rect x="15" y="4" width="1.3" height="1.3"/><rect x="18" y="4" width="1.3" height="1.3"/><rect x="21" y="4" width="1.3" height="1.3"/><rect x="24" y="4" width="1.3" height="1.3"/></svg>
<div class="a" style="left:1512px;top:439px;width:52px;height:23px;border:1px solid #3c3c3c;border-bottom:none;border-radius:3px 3px 0 0;background:#313131"></div>
<div class="a" style="left:1565px;top:441px;width:82px;height:21px;border:1px solid #262626;border-bottom:none;border-radius:3px 3px 0 0;background:#2c2c2c"></div>
<div class="a" style="left:1648px;top:441px;width:83px;height:21px;border:1px solid #262626;border-bottom:none;border-radius:3px 3px 0 0;background:#2c2c2c"></div>
<div class="a" style="left:1508px;top:461px;width:412px;height:1px;background:#262626"></div>
<div class="txt sm" style="left:1523px;top:445px;color:#e8e8e8">La<u>y</u>ers</div>
<div class="txt sm" style="left:1576px;top:446px;color:#e0e0e0"><u>C</u>ompositions</div>
<div class="txt sm" style="left:1660px;top:446px;color:#e0e0e0"><u>U</u>ndo History</div>
<div class="txt sm" style="left:1515px;top:467px;color:#e0e0e0">La<u>y</u>ers</div>
<svg class="a" style="left:1890px;top:463px" width="30" height="16" fill="none" stroke="#8a8a8a" stroke-width="1"><rect x="3.5" y="2.5" width="10" height="10" rx="2"/><rect x="5.5" y="4.5" width="5" height="5"/><rect x="15.5" y="2.5" width="10" height="10" rx="2"/><path d="M17 4l7 7M24 4l-7 7"/></svg>
<div class="a" style="left:1513px;top:483px;width:362px;height:20px;border:1px solid #444;border-radius:3px;background:linear-gradient(#383838,#323232)"></div>
<div class="txt sm" style="left:1517px;top:488px;color:#e8e8e8">Multiply</div>
<div class="a" style="left:1878px;top:483px;width:40px;height:20px;border:1px solid #444;border-radius:3px;background:#333"></div>
<svg class="a" style="left:1850px;top:483px" width="70" height="20" fill="#d0d0d0"><path d="M10 9h8l-4 4z M56 9h8l-4 4z"/><path d="M33 4h12l-4.5 6v6l-3 2v-8z" fill="none" stroke="#d0d0d0" stroke-width="1"/></svg>
<div class="a" style="left:1513px;top:506px;width:361px;height:27px;background:#1b1b1b"></div>
<div class="a" style="left:1513px;top:506px;width:126px;height:27px;background:#52738f"></div>
<div class="txt sm" style="left:1660px;top:515px;color:#e8e8e8">Opacity:&nbsp; 35%</div>
<div class="a" style="left:1874px;top:506px;width:13px;height:27px;border:1px solid #444;border-radius:2px;background:#333"></div>
<div class="a" style="left:1890px;top:506px;width:28px;height:27px;border:1px solid #444;border-radius:3px;background:#333"></div>
<svg class="a" style="left:1874px;top:506px" width="46" height="28" fill="#c8c8c8"><path d="M3 10h7l-3.5-4z M3 17h7l-3.5 4z"/><g fill="none" stroke="#e0e0e0" stroke-width="1.5"><rect x="22" y="6" width="16" height="15"/><path d="M25 10v8M28 11h7M28 15h7"/></g></svg>
<div class="a" style="left:1512px;top:536px;width:393px;height:201px;background:#1b1b1b;overflow:hidden"></div><div class="a" style="left:1536px;top:536px;width:368px;height:47px;background:#52738f"></div><div class="a" style="left:1512px;top:583px;width:393px;height:1px;background:#2c2c2c"></div><div class="a" style="left:1535px;top:536px;width:1px;height:47px;background:#1e3548"></div><div class="a" style="left:1583px;top:536px;width:1px;height:47px;background:#1e3548"></div><div class="a" style="left:1598px;top:536px;width:1px;height:47px;background:#1e3548"></div><div class="a" style="left:1846px;top:536px;width:1px;height:47px;background:#1e3548"></div><div class="a" style="left:1865px;top:536px;width:1px;height:47px;background:#1e3548"></div><div class="a" style="left:1884px;top:536px;width:1px;height:47px;background:#1e3548"></div><svg class="a" style="left:1515px;top:552px" width="18" height="14"><path d="M3 7.5c2-5 10-5 12 0" fill="none" stroke="#d8d8d8" stroke-width="1.2"/><path d="M3.5 9c2 4.5 9 4.5 11 0" fill="none" stroke="#d8d8d8" stroke-width="1.2"/><circle cx="9" cy="7" r="3.6" fill="#d8d8d8"/></svg><svg class="a" style="left:1584px;top:538px" width="14" height="14" fill="none" stroke="#d8e4ee" stroke-width="1"><path d="M3.5 1.5h9v7l-3 3h-4.5v-4"/><path d="M2 3l6 6"/></svg><div class="txt sm" style="left:1600px;top:554px;color:#f0f0f0;font-weight:bold">paper</div><svg class="a" style="left:1846px;top:536px" width="58" height="48">
<path d="M5 24h8v6h-8z M6 24v-3a3 3 0 0 1 6 -1" fill="#7a93a8" stroke="#7a93a8" stroke-width="1"/>
<text x="28" y="29" font-family="Liberation Serif" font-style="italic" font-size="15" fill="#7a93a8" text-anchor="middle">α</text>
<g fill="#7a93a8"><rect x="42" y="19" width="4" height="4"/><rect x="46" y="23" width="4" height="4"/><rect x="42" y="27" width="4" height="4"/><rect x="38" y="23" width="4" height="4"/><rect x="50" y="19" width="2" height="4" opacity=".6"/></g>
</svg><div class="a" style="left:1512px;top:631px;width:393px;height:1px;background:#2c2c2c"></div><div class="a" style="left:1535px;top:583px;width:1px;height:48px;background:#2c2c2c"></div><div class="a" style="left:1583px;top:583px;width:1px;height:48px;background:#2c2c2c"></div><div class="a" style="left:1598px;top:583px;width:1px;height:48px;background:#2c2c2c"></div><div class="a" style="left:1846px;top:583px;width:1px;height:48px;background:#2c2c2c"></div><div class="a" style="left:1865px;top:583px;width:1px;height:48px;background:#2c2c2c"></div><div class="a" style="left:1884px;top:583px;width:1px;height:48px;background:#2c2c2c"></div><svg class="a" style="left:1515px;top:599px" width="18" height="14"><path d="M3 7.5c2-5 10-5 12 0" fill="none" stroke="#d8d8d8" stroke-width="1.2"/><path d="M3.5 9c2 4.5 9 4.5 11 0" fill="none" stroke="#d8d8d8" stroke-width="1.2"/><circle cx="9" cy="7" r="3.6" fill="#d8d8d8"/></svg><svg class="a" style="left:1584px;top:585px" width="14" height="14" fill="none" stroke="#d0d0d0" stroke-width="1"><path d="M3.5 1.5h9v7l-3 3h-4.5v-4"/><path d="M2 3l6 6"/></svg><div class="txt sm" style="left:1600px;top:601px;color:#f0f0f0;font-weight:normal">sketch</div><svg class="a" style="left:1846px;top:583px" width="58" height="48">
<path d="M5 24h8v6h-8z M6 24v-3a3 3 0 0 1 6 -1" fill="#5a5a5a" stroke="#5a5a5a" stroke-width="1"/>
<text x="28" y="29" font-family="Liberation Serif" font-style="italic" font-size="15" fill="#5a5a5a" text-anchor="middle">α</text>
<g fill="#5a5a5a"><rect x="42" y="19" width="4" height="4"/><rect x="46" y="23" width="4" height="4"/><rect x="42" y="27" width="4" height="4"/><rect x="38" y="23" width="4" height="4"/><rect x="50" y="19" width="2" height="4" opacity=".6"/></g>
</svg><div class="a" style="left:1512px;top:679px;width:393px;height:1px;background:#2c2c2c"></div><div class="a" style="left:1535px;top:631px;width:1px;height:48px;background:#2c2c2c"></div><div class="a" style="left:1583px;top:631px;width:1px;height:48px;background:#2c2c2c"></div><div class="a" style="left:1598px;top:631px;width:1px;height:48px;background:#2c2c2c"></div><div class="a" style="left:1846px;top:631px;width:1px;height:48px;background:#2c2c2c"></div><div class="a" style="left:1865px;top:631px;width:1px;height:48px;background:#2c2c2c"></div><div class="a" style="left:1884px;top:631px;width:1px;height:48px;background:#2c2c2c"></div><svg class="a" style="left:1515px;top:647px" width="18" height="14"><path d="M3 7.5c2-5 10-5 12 0" fill="none" stroke="#d8d8d8" stroke-width="1.2"/><path d="M3.5 9c2 4.5 9 4.5 11 0" fill="none" stroke="#d8d8d8" stroke-width="1.2"/><circle cx="9" cy="7" r="3.6" fill="#d8d8d8"/></svg><svg class="a" style="left:1584px;top:633px" width="14" height="14" fill="none" stroke="#d0d0d0" stroke-width="1"><path d="M3.5 1.5h9v7l-3 3h-4.5v-4"/><path d="M2 3l6 6"/></svg><div class="txt sm" style="left:1600px;top:649px;color:#f0f0f0;font-weight:normal">details</div><svg class="a" style="left:1846px;top:631px" width="58" height="48">
<path d="M5 24h8v6h-8z M6 24v-3a3 3 0 0 1 6 -1" fill="#5a5a5a" stroke="#5a5a5a" stroke-width="1"/>
<text x="28" y="29" font-family="Liberation Serif" font-style="italic" font-size="15" fill="#5a5a5a" text-anchor="middle">α</text>
<g fill="#5a5a5a"><rect x="42" y="19" width="4" height="4"/><rect x="46" y="23" width="4" height="4"/><rect x="42" y="27" width="4" height="4"/><rect x="38" y="23" width="4" height="4"/><rect x="50" y="19" width="2" height="4" opacity=".6"/></g>
</svg><div class="a" style="left:1512px;top:727px;width:393px;height:1px;background:#2c2c2c"></div><div class="a" style="left:1535px;top:679px;width:1px;height:48px;background:#2c2c2c"></div><div class="a" style="left:1583px;top:679px;width:1px;height:48px;background:#2c2c2c"></div><div class="a" style="left:1598px;top:679px;width:1px;height:48px;background:#2c2c2c"></div><div class="a" style="left:1846px;top:679px;width:1px;height:48px;background:#2c2c2c"></div><div class="a" style="left:1865px;top:679px;width:1px;height:48px;background:#2c2c2c"></div><div class="a" style="left:1884px;top:679px;width:1px;height:48px;background:#2c2c2c"></div><svg class="a" style="left:1515px;top:695px" width="18" height="14"><path d="M3 7.5c2-5 10-5 12 0" fill="none" stroke="#d8d8d8" stroke-width="1.2"/><path d="M3.5 9c2 4.5 9 4.5 11 0" fill="none" stroke="#d8d8d8" stroke-width="1.2"/><circle cx="9" cy="7" r="3.6" fill="#d8d8d8"/></svg><svg class="a" style="left:1584px;top:681px" width="14" height="14" fill="none" stroke="#d0d0d0" stroke-width="1"><path d="M3.5 1.5h9v7l-3 3h-4.5v-4"/><path d="M2 3l6 6"/></svg><div class="txt sm" style="left:1600px;top:697px;color:#f0f0f0;font-weight:normal">Paint Layer 5</div><svg class="a" style="left:1846px;top:679px" width="58" height="48">
<path d="M5 24h8v6h-8z M6 24v-3a3 3 0 0 1 6 -1" fill="#5a5a5a" stroke="#5a5a5a" stroke-width="1"/>
<text x="28" y="29" font-family="Liberation Serif" font-style="italic" font-size="15" fill="#5a5a5a" text-anchor="middle">α</text>
<g fill="#5a5a5a"><rect x="42" y="19" width="4" height="4"/><rect x="46" y="23" width="4" height="4"/><rect x="42" y="27" width="4" height="4"/><rect x="38" y="23" width="4" height="4"/><rect x="50" y="19" width="2" height="4" opacity=".6"/></g>
</svg><div class="a" style="left:1543px;top:539px;width:32px;height:42px;background:#cfc8b6;border:1px solid #1e3548;background-image:radial-gradient(#a8a090 0.6px,transparent 0.9px);background-size:4px 4px"></div><div class="a" style="left:1546px;top:588px;width:26px;height:41px;background-color:#fff;background-image:linear-gradient(45deg,#d4d4d4 25%,transparent 25%,transparent 75%,#d4d4d4 75%),linear-gradient(45deg,#d4d4d4 25%,transparent 25%,transparent 75%,#d4d4d4 75%);background-size:10px 10px;background-position:0 0,5px 5px"></div><div class="a" style="left:1539px;top:636px;width:41px;height:41px;background-color:#fff;background-image:linear-gradient(45deg,#d4d4d4 25%,transparent 25%,transparent 75%,#d4d4d4 75%),linear-gradient(45deg,#d4d4d4 25%,transparent 25%,transparent 75%,#d4d4d4 75%);background-size:12px 12px;background-position:0 0,6px 6px"></div><div class="a" style="left:1539px;top:685px;width:41px;height:36px;background-color:#fff;background-image:linear-gradient(45deg,#d4d4d4 25%,transparent 25%,transparent 75%,#d4d4d4 75%),linear-gradient(45deg,#d4d4d4 25%,transparent 25%,transparent 75%,#d4d4d4 75%);background-size:12px 12px;background-position:0 0,6px 6px"></div><svg class="a" style="left:1539px;top:685px" width="41" height="36"><path d="M4 21c4-1 8 2 12 8 3 2 6 3 8 4" stroke="#8a9088" stroke-width="3" fill="none"/><path d="M25 17c3-4 6-8 9-10" stroke="#8a9088" stroke-width="3" fill="none"/></svg><div class="a" style="left:1539px;top:732px;width:41px;height:5px;background-color:#fff;background-image:linear-gradient(45deg,#d4d4d4 25%,transparent 25%,transparent 75%,#d4d4d4 75%),linear-gradient(45deg,#d4d4d4 25%,transparent 25%,transparent 75%,#d4d4d4 75%);background-size:12px 12px;background-position:0 0,6px 6px"></div><svg class="a" style="left:1584px;top:729px" width="14" height="8" fill="none" stroke="#d0d0d0" stroke-width="1"><path d="M3.5 1.5h9v7M2 3l6 6"/></svg><div class="a" style="left:1905px;top:536px;width:13px;height:201px;background:#2b2b2b"></div><div class="a" style="left:1905px;top:536px;width:13px;height:13px;border:1px solid #444;background:#2e2e2e"></div><div class="a" style="left:1905px;top:724px;width:13px;height:13px;border:1px solid #444;background:#2e2e2e"></div><div class="a" style="left:1906px;top:551px;width:11px;height:90px;border:1px solid #444;background:#333"></div><svg class="a" style="left:1905px;top:536px" width="13" height="201" fill="#c8c8c8"><path d="M3 9h7l-3.5-4z M3 192h7l-3.5 4z"/></svg><svg class="a" style="left:1508px;top:740px" width="412" height="26" fill="none" stroke="#d8d8d8" stroke-width="1.5">
<rect x="8.5" y="5.5" width="15" height="15"/><path d="M16 9v9M11.5 13.5h9"/>
<path d="M30 11h8l-4 4z" fill="#b8b8b8" stroke="none"/>
<path d="M49.5 9.5v11h11 M53.5 5.5h11v11h-11z"/>
<path d="M81 9l8 8 8-8"/>
<path d="M113 17l8-8 8 8"/>
<path d="M145 7h16M145 13h16M145 19h16"/><path d="M155 5v4M149 11v4M155 17v4" stroke-width="2"/>
<path d="M389.5 9.5h14M392 9.5l1 11h8l1-11M394 9.5v-2h6v2" fill="#d8d8d8" stroke="#d8d8d8"/>
</svg><svg class="a" style="left:1700px;top:766px" width="30" height="8" fill="#8a8a8a"><rect x="9" y="4" width="1.3" height="1.3"/><rect x="12" y="4" width="1.3" height="1.3"/><rect x="15" y="4" width="1.3" height="1.3"/><rect x="18" y="4" width="1.3" height="1.3"/><rect x="21" y="4" width="1.3" height="1.3"/><rect x="24" y="4" width="1.3" height="1.3"/></svg><div class="txt sm" style="left:1515px;top:780px;color:#e0e0e0">Tool <u>O</u>ptions</div><svg class="a" style="left:1902px;top:778px" width="14" height="14" fill="none" stroke="#8a8a8a" stroke-width="1"><rect x="1.5" y="1.5" width="10" height="10" rx="2"/><rect x="3.5" y="3.5" width="5" height="5"/></svg><div class="txt sm" style="left:1515px;top:809px;color:#e0e0e0">Brush Smoothing:</div><div class="a" style="left:1626px;top:805px;width:287px;height:19px;border:1px solid #444;border-radius:3px;background:linear-gradient(#383838,#323232)"></div><div class="txt sm" style="left:1630px;top:809px;color:#e8e8e8">Basic</div><svg class="a" style="left:1895px;top:808px" width="14" height="12" fill="#d0d0d0"><path d="M2 4h8l-4 4z"/></svg><div class="a" style="left:1515px;top:831px;width:397px;height:1px;background:#e8e8e8"></div><div class="a" style="left:1516px;top:840px;width:13px;height:13px;background:#1d1d1d;border:1px solid #262626"></div><div class="txt sm" style="left:1534px;top:842px;color:#e0e0e0">Snap to Assistants</div>

<div class="a" style="left:0;top:870px;width:1920px;height:146px;background:#313131"></div>
<div class="txt sm" style="left:4px;top:873px;color:#e0e0e0"><u>B</u>rush Presets</div>
<svg class="a" style="left:1890px;top:870px" width="30" height="16" fill="none" stroke="#8a8a8a" stroke-width="1"><rect x="3.5" y="2.5" width="10" height="10" rx="2"/><rect x="5.5" y="4.5" width="5" height="5"/><rect x="15.5" y="2.5" width="10" height="10" rx="2"/><path d="M17 4l7 7M24 4l-7 7"/></svg>
<div class="a" style="left:2px;top:889px;width:1841px;height:20px;border:1px solid #444;border-radius:3px;background:linear-gradient(#3a3a3a,#333)"></div>
<div class="txt sm" style="left:5px;top:894px;color:#e8e8e8">Watercolor</div>
<svg class="a" style="left:1825px;top:892px" width="14" height="14" fill="#d0d0d0"><path d="M3 5h8l-4 4z"/></svg>
<div class="a" style="left:1845px;top:889px;width:48px;height:20px;border:1px solid #444;border-radius:3px;background:#333"></div>
<svg class="a" style="left:1845px;top:889px" width="48" height="20" fill="none" stroke="#d0d0d0" stroke-width="1"><path d="M8.5 3.5h6v13l-3-2.5-3 2.5z"/><path d="M40 15h6l-3 3z" fill="#b0b0b0" stroke="none"/></svg>
<div class="txt sm" style="left:1865px;top:895px;color:#e8e8e8">Ta<u>g</u></div>
<div class="a" style="left:1895px;top:889px;width:23px;height:20px;border:1px solid #444;border-radius:3px;background:#333"></div>
<svg class="a" style="left:1895px;top:889px" width="23" height="20" fill="none" stroke="#e0e0e0" stroke-width="1.3"><rect x="5" y="4" width="13" height="11"/><path d="M7 8h9M7 11h9"/></svg>
<div class="a" style="left:2px;top:912px;width:1899px;height:52px;background:#1b1b1b"></div>
<div class="a" style="left:1903px;top:912px;width:15px;height:52px;background:#2b2b2b"></div>
<div class="a" style="left:1904px;top:912px;width:13px;height:13px;border:1px solid #444;background:#2e2e2e"></div>
<div class="a" style="left:1904px;top:951px;width:13px;height:13px;border:1px solid #444;background:#2e2e2e"></div>
<svg class="a" style="left:1904px;top:912px" width="13" height="52" fill="#c8c8c8"><path d="M3 9h7l-3.5-4z M3 43h7l-3.5 4z"/></svg>
<div class="a" style="left:2px;top:966px;width:1887px;height:21px;background:#1b1b1b"></div>
<div class="txt sm" style="left:4px;top:970px;color:#6a6a6a">Search</div>
<div class="a" style="left:1891px;top:965px;width:27px;height:22px;border:1px solid #444;border-radius:3px;background:#333"></div>
<svg class="a" style="left:1891px;top:965px" width="27" height="22" fill="none" stroke="#d0d0d0" stroke-width="1.2"><path d="M8.5 5.5h8l2.5 2.5v9h-10.5z M11 5.5v3.5h5v-3.5 M10.5 17v-4h7v4"/></svg>
<div class="a" style="left:0;top:989px;width:1920px;height:27px;background:#313131"></div>
<div class="a" style="left:6px;top:994px;width:15px;height:16px;border:1px solid #8a8a8a"></div>
<svg class="a" style="left:6px;top:994px" width="15" height="16"><circle cx="7.5" cy="8" r="4" fill="none" stroke="#bbb" stroke-width="1" stroke-dasharray="1 1.3"/></svg>
<div class="txt" style="left:35px;top:998px;font-size:11px;color:#e0e0e0">j) WaterC Special Splats</div>
<div class="txt" style="left:505px;top:998px;font-size:11px;color:#e0e0e0">RGB/Alpha (8-bit integer/channel)&nbsp; sRGB-elle-V2-srgbtrc.icc</div>
<div class="a" style="left:1430px;top:992px;width:137px;height:23px;border:1px solid #2c2c2c;border-radius:2px"></div>
<div class="a" style="left:1435px;top:996px;width:9px;height:15px;background:#52738f"></div>
<div class="txt" style="left:1436px;top:998px;font-size:11px;color:#e0e0e0">3,000 x 4,000 (352.5 MiB)</div>
<svg class="a" style="left:1682px;top:995px" width="16" height="16" fill="none" stroke="#bbb" stroke-width="1.2"><path d="M4 4a5.5 5.5 0 1 1 0 8"/><path d="M3 2v3h3"/><rect x="6" y="7" width="4" height="4"/></svg>
<div class="txt" style="left:1771px;top:998px;font-size:11px;color:#e0e0e0">35%</div>
<div class="a" style="left:1812px;top:1002px;width:80px;height:3px;background:#242424;border-radius:2px"></div>
<div class="a" style="left:1812px;top:1002px;width:22px;height:3px;background:#6e8eab;border-radius:2px"></div>
<div class="a" style="left:1832px;top:997px;width:12px;height:12px;border:1px solid #4a4a4a;border-radius:3px;background:#3e3e3e"></div>
<div class="a" style="left:1895px;top:992px;width:23px;height:22px;border:1px solid #444;border-radius:2px;background:#333"></div>
<div class="a" style="left:1899px;top:995px;width:14px;height:16px;background:radial-gradient(#2a8aa0,#a8d0b0 60%,#e8f0f0)"></div>
<svg class="a" style="left:3px;top:913px" width="56" height="50"><defs><clipPath id="tc0"><rect width="56" height="50"/></clipPath></defs><g clip-path="url(#tc0)"><rect width="56" height="50" fill="#d9d9d9"/><path d="M50 -2 L57 3 L44 16 L38 11z" fill="#3a9ad8" stroke="#1a4a6a" stroke-width=".5"/>
<path d="M38 11 L44 16 L33 27 L30 24z" fill="#a8a8a8" stroke="#555" stroke-width=".5"/>
<path d="M30 24 L33 27 C30 32 25 34 22 35 C23 31 26 26 30 24z" fill="#8a5a20" stroke="#3a2a10" stroke-width=".5"/><path d="M8 26 C4 38 10 46 30 44 L48 38" fill="none" stroke="#7090e8" stroke-width="2.5" stroke-linecap="round" opacity="0.5"/></g></svg><svg class="a" style="left:62px;top:913px" width="56" height="50"><defs><clipPath id="tc1"><rect width="56" height="50"/></clipPath></defs><g clip-path="url(#tc1)"><rect width="56" height="50" fill="#d9d9d9"/><path d="M50 -2 L57 3 L44 16 L38 11z" fill="#3a9ad8" stroke="#1a4a6a" stroke-width=".5"/>
<path d="M38 11 L44 16 L33 27 L30 24z" fill="#a8a8a8" stroke="#555" stroke-width=".5"/>
<path d="M30 24 L33 27 C30 32 25 34 22 35 C23 31 26 26 30 24z" fill="#8a5a20" stroke="#3a2a10" stroke-width=".5"/><path d="M12 34 L32 44 L38 36 L54 44" fill="none" stroke="#6080e0" stroke-width="3" stroke-linecap="round" opacity="0.5"/><path d="M12 34L26 41" stroke="#3a60d8" stroke-width="3.5"/></g></svg><svg class="a" style="left:121px;top:913px" width="56" height="50"><defs><clipPath id="tc2"><rect width="56" height="50"/></clipPath></defs><g clip-path="url(#tc2)"><rect width="56" height="50" fill="#d9d9d9"/><path d="M50 -2 L57 3 L44 16 L38 11z" fill="#3a9ad8" stroke="#1a4a6a" stroke-width=".5"/>
<path d="M38 11 L44 16 L33 27 L30 24z" fill="#a8a8a8" stroke="#555" stroke-width=".5"/>
<path d="M30 24 L33 27 C30 32 27 33 24 34 C25 30 26 26 30 24z" fill="#8a5a20" stroke="#3a2a10" stroke-width=".5"/><path d="M10 28 C6 40 14 46 30 44 L54 36" fill="none" stroke="#4a70e8" stroke-width="5" stroke-linecap="round" opacity="0.7"/></g></svg><svg class="a" style="left:180px;top:913px" width="56" height="50"><defs><clipPath id="tc3"><rect width="56" height="50"/></clipPath></defs><g clip-path="url(#tc3)"><rect width="56" height="50" fill="#d9d9d9"/><path d="M50 -2 L57 3 L44 16 L38 11z" fill="#3a9ad8" stroke="#1a4a6a" stroke-width=".5"/>
<path d="M38 11 L44 16 L33 27 L30 24z" fill="#a8a8a8" stroke="#555" stroke-width=".5"/>
<path d="M30 24 L33 27 C30 32 25 31 22 32 C23 28 26 26 30 24z" fill="#8a5a20" stroke="#3a2a10" stroke-width=".5"/><path d="M12 26 C4 40 14 50 36 44" fill="none" stroke="#b0b8e8" stroke-width="4" stroke-linecap="round" opacity="0.5"/><path d="M30 50 C42 46 50 40 56 28 V50z" fill="#4a70e8" opacity=".85"/></g></svg><svg class="a" style="left:239px;top:913px" width="56" height="50"><defs><clipPath id="tc4"><rect width="56" height="50"/></clipPath></defs><g clip-path="url(#tc4)"><rect width="56" height="50" fill="#d9d9d9"/><path d="M7 16l8-7 3 3-8 7h-3z" fill="none" stroke="#333" stroke-width="1.5"/><path d="M50 -2 L57 3 L44 16 L38 11z" fill="#3a9ad8" stroke="#1a4a6a" stroke-width=".5"/>
<path d="M38 11 L44 16 L33 27 L30 24z" fill="#a8a8a8" stroke="#555" stroke-width=".5"/>
<path d="M30 24 L33 27 C30 32 25 31 22 32 C23 28 26 26 30 24z" fill="#8a5a20" stroke="#3a2a10" stroke-width=".5"/><path d="M12 26 C6 40 16 48 30 44 C40 40 48 38 56 40" fill="none" stroke="#4a78f0" stroke-width="8" stroke-linecap="round" opacity="0.75"/></g></svg><svg class="a" style="left:298px;top:913px" width="56" height="50"><defs><clipPath id="tc5"><rect width="56" height="50"/></clipPath></defs><g clip-path="url(#tc5)"><rect width="56" height="50" fill="#d9d9d9"/><path d="M50 -2 L57 3 L44 16 L38 11z" fill="#3a9ad8" stroke="#1a4a6a" stroke-width=".5"/>
<path d="M38 11 L44 16 L33 27 L30 24z" fill="#a8a8a8" stroke="#555" stroke-width=".5"/>
<path d="M30 24 L33 27 C30 32 23 31 20 32 C21 28 26 26 30 24z" fill="#8a5a20" stroke="#3a2a10" stroke-width=".5"/><path d="M10 28 C6 42 20 48 34 42" fill="none" stroke="#4a70e8" stroke-width="7" stroke-linecap="round" opacity="0.7"/></g></svg><svg class="a" style="left:357px;top:913px" width="56" height="50"><defs><clipPath id="tc6"><rect width="56" height="50"/></clipPath></defs><g clip-path="url(#tc6)"><rect width="56" height="50" fill="#d9d9d9"/><path d="M8 16c1-4 6-5 9-2M18 20c-2 3-7 3-9 0" fill="none" stroke="#666" stroke-width="2"/><path d="M16 11l2 4-4 0z M10 23l-2-4 4 0z" fill="#666"/><path d="M50 -2 L57 3 L44 16 L38 11z" fill="#3a9ad8" stroke="#1a4a6a" stroke-width=".5"/>
<path d="M38 11 L44 16 L33 27 L30 24z" fill="#222" stroke="#555" stroke-width=".5"/>
<path d="M30 24 L33 27 C30 32 21 38 18 39 C19 35 26 26 30 24z" fill="#8a5a20" stroke="#3a2a10" stroke-width=".5"/><path d="M10 50 C8 40 12 36 14 40 C16 48 20 40 24 44" fill="none" stroke="#5060e0" stroke-width="4" stroke-linecap="round" opacity="0.6"/><rect x="26" y="38" width="30" height="12" fill="#a0a8e8" opacity=".4"/></g></svg><svg class="a" style="left:416px;top:913px" width="56" height="50"><defs><clipPath id="tc7"><rect width="56" height="50"/></clipPath></defs><g clip-path="url(#tc7)"><rect width="56" height="50" fill="#d9d9d9"/><path d="M8 16c1-4 6-5 9-2M18 20c-2 3-7 3-9 0" fill="none" stroke="#666" stroke-width="2"/><path d="M16 11l2 4-4 0z M10 23l-2-4 4 0z" fill="#666"/><path d="M50 -2 L57 3 L44 16 L38 11z" fill="#3a9ad8" stroke="#1a4a6a" stroke-width=".5"/>
<path d="M38 11 L44 16 L33 27 L30 24z" fill="#222" stroke="#555" stroke-width=".5"/>
<path d="M30 24 L33 27 C30 32 21 38 18 39 C19 35 26 26 30 24z" fill="#8a5a20" stroke="#3a2a10" stroke-width=".5"/><rect x="10" y="36" width="30" height="14" fill="#7080e8" opacity=".45"/></g></svg><svg class="a" style="left:475px;top:913px" width="56" height="50"><defs><clipPath id="tc8"><rect width="56" height="50"/></clipPath></defs><g clip-path="url(#tc8)"><rect width="56" height="50" fill="#d9d9d9"/><path d="M0 14 C10 10 20 20 30 30 C38 40 30 50 0 50z" fill="#8aa8e8" opacity=".55"/><path d="M58 -2 L36 16 L26 30 L34 34 L44 22 L58 10z" fill="#c8b0e8" stroke="#3a2a50" stroke-width=".6"/><path d="M40 14l4 4" stroke="#111" stroke-width="3"/></g></svg><svg class="a" style="left:534px;top:913px" width="56" height="50"><defs><clipPath id="tc9"><rect width="56" height="50"/></clipPath></defs><g clip-path="url(#tc9)"><rect width="56" height="50" fill="#d9d9d9"/><rect x="0" y="0" width="56" height="50" fill="#52738f"/><rect x="3" y="3" width="50" height="47" fill="#8ec0e2"/><path d="M24 8 C26 2 44 6 52 12 C54 18 48 24 44 24 L26 16z" fill="#a8a848" stroke="#222" stroke-width="1"/><g fill="#4a7ad8" opacity=".6"><circle cx="14" cy="30" r="1.5"/><circle cx="20" cy="38" r="1.3"/><circle cx="26" cy="26" r="1.2"/><circle cx="10" cy="42" r="1.4"/><circle cx="30" cy="36" r="1.2"/><circle cx="18" cy="46" r="1.5"/></g></g></svg><svg class="a" style="left:593px;top:913px" width="56" height="50"><defs><clipPath id="tc10"><rect width="56" height="50"/></clipPath></defs><g clip-path="url(#tc10)"><rect width="56" height="50" fill="#d9d9d9"/><path d="M7 16l8-7 3 3-8 7h-3z" fill="none" stroke="#333" stroke-width="1.5"/><path d="M50 -2 L57 3 L44 16 L38 11z" fill="#3a9ad8" stroke="#1a4a6a" stroke-width=".5"/>
<path d="M38 11 L44 16 L33 27 L30 24z" fill="#a8a8a8" stroke="#555" stroke-width=".5"/>
<path d="M30 24 L33 27 C30 32 21 34 18 35 C19 31 26 26 30 24z" fill="#8a5a20" stroke="#3a2a10" stroke-width=".5"/><path d="M8 38 C14 30 26 34 34 40 C44 46 50 40 56 36 V50 H6z" fill="#8aa0ee" opacity=".6"/></g></svg><svg class="a" style="left:652px;top:913px" width="56" height="50"><defs><clipPath id="tc11"><rect width="56" height="50"/></clipPath></defs><g clip-path="url(#tc11)"><rect width="56" height="50" fill="#d9d9d9"/><path d="M50 -2 L57 3 L44 16 L38 11z" fill="#3a9ad8" stroke="#1a4a6a" stroke-width=".5"/>
<path d="M38 11 L44 16 L33 27 L30 24z" fill="#a8a8a8" stroke="#555" stroke-width=".5"/>
<path d="M30 24 L33 27 C30 32 21 34 18 35 C19 31 26 26 30 24z" fill="#8a5a20" stroke="#3a2a10" stroke-width=".5"/><path d="M2 36 C8 28 20 34 30 38 C42 42 50 40 56 36 V50 H0z" fill="#6a88ee" opacity=".6"/></g></svg><svg class="a" style="left:711px;top:913px" width="56" height="50"><defs><clipPath id="tc12"><rect width="56" height="50"/></clipPath></defs><g clip-path="url(#tc12)"><rect width="56" height="50" fill="#d9d9d9"/><path d="M7 16l8-7 3 3-8 7h-3z" fill="none" stroke="#333" stroke-width="1.5"/><path d="M57 -2 L60 8 L42 24 L34 18z" fill="#58a8c8" stroke="#333" stroke-width=".6"/><path d="M34 18 L42 24 C36 34 22 38 16 40 C20 32 28 24 34 18z" fill="#8a5a20" stroke="#222" stroke-width=".8"/><path d="M10 50 C12 40 26 40 40 42 L52 50z" fill="#6a88ee" opacity=".55"/></g></svg><svg class="a" style="left:770px;top:913px" width="56" height="50"><defs><clipPath id="tc13"><rect width="56" height="50"/></clipPath></defs><g clip-path="url(#tc13)"><rect width="56" height="50" fill="#d9d9d9"/><path d="M7 16l8-7 3 3-8 7h-3z" fill="none" stroke="#333" stroke-width="1.5"/><path d="M19 12c-2 3-3 4-3 5.5a3 3 0 0 0 6 0c0-1.5-1-2.5-3-5.5z" fill="none" stroke="#2a9ae8" stroke-width="1.3"/><ellipse cx="26" cy="34" rx="30" ry="16" fill="#fafafa" opacity=".7"/><path d="M57 -2 L60 2 L38 26 L34 22z" fill="#9080c8"/><path d="M34 22 L38 26 C32 32 26 36 22 38 C24 34 30 26 34 22z" fill="#f0f0f0" stroke="#555" stroke-width=".6"/></g></svg><svg class="a" style="left:829px;top:913px" width="56" height="50"><defs><clipPath id="tc14"><rect width="56" height="50"/></clipPath></defs><g clip-path="url(#tc14)"><rect width="56" height="50" fill="#d9d9d9"/><path d="M7 16l8-7 3 3-8 7h-3z" fill="none" stroke="#333" stroke-width="1.5"/><path d="M19 12c-2 3-3 4-3 5.5a3 3 0 0 0 6 0c0-1.5-1-2.5-3-5.5z" fill="none" stroke="#2a9ae8" stroke-width="1.3"/><path d="M0 40 C10 34 20 46 30 42 C40 38 48 44 56 38 V50 H0z" fill="#78d068" opacity=".6"/><path d="M57 -2 L60 4 L44 20 L38 14z" fill="#5a9ab8" stroke="#333" stroke-width=".5"/><path d="M38 14 L44 20 C42 30 32 34 26 36 C26 28 32 20 38 14z" fill="#3a2a28" stroke="#111" stroke-width=".6"/></g></svg><svg class="a" style="left:888px;top:913px" width="56" height="50"><defs><clipPath id="tc15"><rect width="56" height="50"/></clipPath></defs><g clip-path="url(#tc15)"><rect width="56" height="50" fill="#d9d9d9"/><path d="M7 16l8-7 3 3-8 7h-3z" fill="none" stroke="#333" stroke-width="1.5"/><path d="M19 12c-2 3-3 4-3 5.5a3 3 0 0 0 6 0c0-1.5-1-2.5-3-5.5z" fill="none" stroke="#2a9ae8" stroke-width="1.3"/><path d="M4 36 C14 32 20 42 32 40 C42 38 48 44 56 38" fill="none" stroke="#78d068" stroke-width="5" opacity=".6"/><path d="M50 -2 L57 3 L44 16 L38 11z" fill="#3a9ad8" stroke="#1a4a6a" stroke-width=".5"/>
<path d="M38 11 L44 16 L33 27 L30 24z" fill="#a8a8a8" stroke="#555" stroke-width=".5"/>
<path d="M30 24 L33 27 C30 32 25 34 22 35 C23 31 26 26 30 24z" fill="#c08040" stroke="#3a2a10" stroke-width=".5"/></g></svg><svg class="a" style="left:947px;top:913px" width="56" height="50"><defs><clipPath id="tc16"><rect width="56" height="50"/></clipPath></defs><g clip-path="url(#tc16)"><rect width="56" height="50" fill="#d9d9d9"/><path d="M9 12c-2 3-3 4-3 5.5a3 3 0 0 0 6 0c0-1.5-1-2.5-3-5.5z" fill="none" stroke="#2a9ae8" stroke-width="1.3"/><path d="M4 40 C14 34 24 44 34 40 C44 36 50 36 56 34" fill="none" stroke="#78d068" stroke-width="5" opacity=".6"/><path d="M50 -2 L57 3 L44 16 L38 11z" fill="#3a9ad8" stroke="#1a4a6a" stroke-width=".5"/>
<path d="M38 11 L44 16 L33 27 L30 24z" fill="#a8a8a8" stroke="#555" stroke-width=".5"/>
<path d="M30 24 L33 27 C30 32 25 34 22 35 C23 31 26 26 30 24z" fill="#c09050" stroke="#3a2a10" stroke-width=".5"/></g></svg><div class="a" style="left:1004px;top:913px;width:1px;height:50px;background:#262626"></div><div class="a" style="left:1063px;top:913px;width:1px;height:50px;background:#262626"></div><div class="a" style="left:1122px;top:913px;width:1px;height:50px;background:#262626"></div><div class="a" style="left:1181px;top:913px;width:1px;height:50px;background:#262626"></div><div class="a" style="left:1240px;top:913px;width:1px;height:50px;background:#262626"></div><div class="a" style="left:1299px;top:913px;width:1px;height:50px;background:#262626"></div><div class="a" style="left:1358px;top:913px;width:1px;height:50px;background:#262626"></div><div class="a" style="left:1417px;top:913px;width:1px;height:50px;background:#262626"></div><div class="a" style="left:1476px;top:913px;width:1px;height:50px;background:#262626"></div><div class="a" style="left:1535px;top:913px;width:1px;height:50px;background:#262626"></div><div class="a" style="left:1594px;top:913px;width:1px;height:50px;background:#262626"></div><div class="a" style="left:1653px;top:913px;width:1px;height:50px;background:#262626"></div><div class="a" style="left:1712px;top:913px;width:1px;height:50px;background:#262626"></div><div class="a" style="left:1771px;top:913px;width:1px;height:50px;background:#262626"></div><div class="a" style="left:1830px;top:913px;width:1px;height:50px;background:#262626"></div><div class="a" style="left:1889px;top:913px;width:1px;height:50px;background:#262626"></div>

</body></html>
